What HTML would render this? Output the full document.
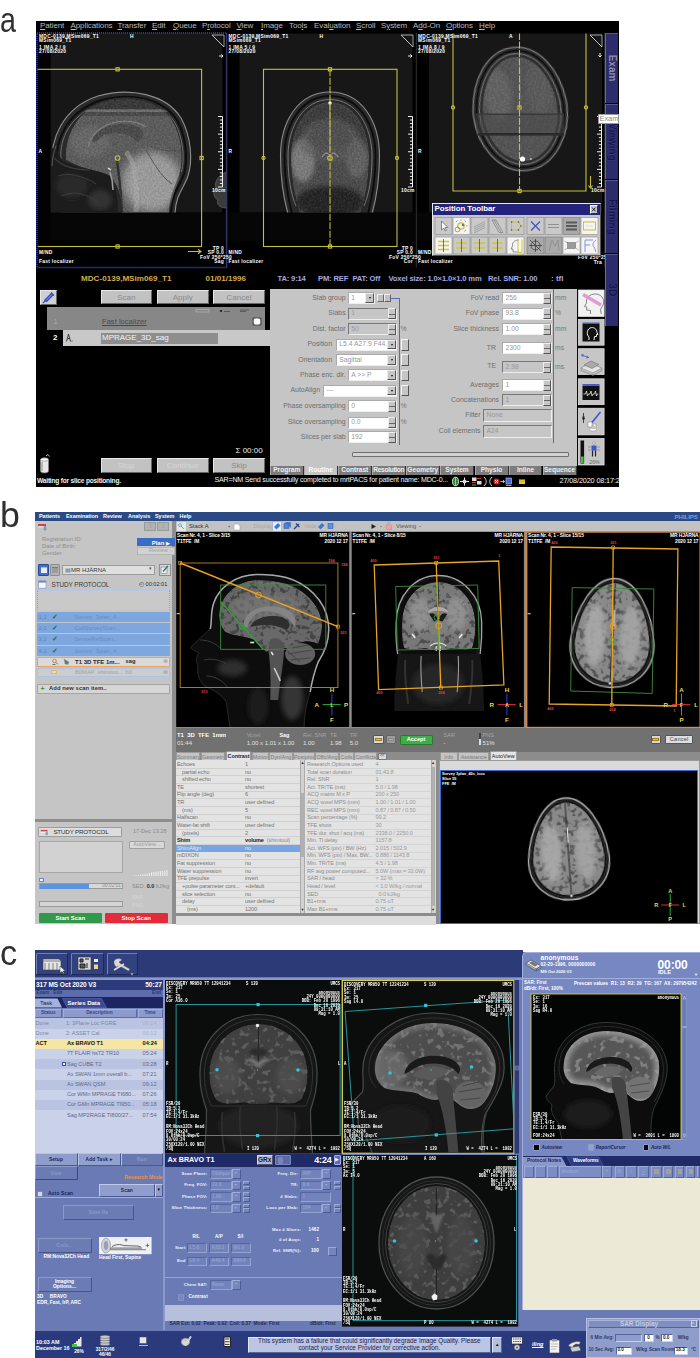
<!DOCTYPE html>
<html><head><meta charset="utf-8"><title>MRI consoles</title>
<style>
*{box-sizing:border-box;margin:0;padding:0}
html,body{width:700px;height:1358px;background:#fff;overflow:hidden}
body{position:relative;font-family:"Liberation Sans",sans-serif;font-size:8px;color:#000}
.ab,.ab>*{position:absolute}
.t{position:absolute;white-space:nowrap;line-height:1}
.lbl{position:absolute;font-size:35px;color:#303030;line-height:1;font-family:"Liberation Sans",sans-serif;transform:scaleX(0.88);transform-origin:0 0}
svg{position:absolute;overflow:hidden}
/* ---------- panel a ---------- */
#pa{position:absolute;left:36px;top:20.5px;width:582.5px;height:466px;background:#000;overflow:hidden}
#pa .menu{position:absolute;left:0;top:0;width:100%;height:11.5px;background:#000}
#pa .menu span{position:absolute;top:1.5px;font-size:8px;color:#b8b8b8;line-height:1;letter-spacing:-0.1px}
#pa .menu u{text-decoration-thickness:0.6px;text-underline-offset:0.5px}
.vw{position:absolute;background:#000;overflow:hidden}
.vt{position:absolute;color:#fff;font-size:4.9px;font-weight:bold;line-height:4.5px;white-space:nowrap;letter-spacing:0.28px}
.btnA{position:absolute;background:#c2c2c2;color:#8a8a8a;font-size:8px;text-align:center;border:0.7px solid #e8e8e8;border-right-color:#666;border-bottom-color:#666}
.laA{position:absolute;font-size:6.9px;margin-top:0.4px;color:#6e6e6e;text-align:right;white-space:nowrap;line-height:1}
.fdA{position:absolute;background:#fff;border:0.6px solid #aaa;border-right-color:#eee;border-bottom-color:#eee;font-size:6.8px;color:#999;line-height:1;padding:1.6px 0 0 2.5px;white-space:nowrap;overflow:hidden}
.fdA.g{background:#c6c6c6;border-color:#777 #eee #eee #777}
.spA{position:absolute;width:8px;height:11px;background:#c6c6c6;border:0.6px solid #eee;border-right-color:#555;border-bottom-color:#555}
.spA:after{content:"";position:absolute;left:0;right:0;top:4.6px;height:0.7px;background:#666}
.ddA{position:absolute;width:9px;height:9.6px;margin-left:-1.2px;background:#c6c6c6;border:0.6px solid #eee;border-right-color:#555;border-bottom-color:#555}
.ddA:after{content:"";position:absolute;left:2.4px;top:3.2px;border:1.7px solid transparent;border-top:2.2px solid #111;border-bottom:0}
.tbA{position:absolute;width:6.5px;height:8.5px;background:#c0c0c0;border:0.6px solid #eee;border-right-color:#666;border-bottom-color:#666}
.xbA{position:absolute;width:8.5px;height:11.5px;background:#c6c6c6;border:0.6px solid #f4f4f4;border-right-color:#555;border-bottom-color:#555}
.vtab{position:absolute;left:604.8px;width:13.7px;background:#2c2c6c;border-left:0.8px solid #6a6a9a;border-top:0.8px solid #55558a}
.vtab span{position:absolute;left:50%;top:50%;transform:translate(-50%,-50%) rotate(90deg);font-size:10px;font-weight:bold;color:#8c8ca6;white-space:nowrap;line-height:1}
.vtab span.d{color:#15154a;text-shadow:0.4px 0.4px 0 #4a4a90}
.btA{position:absolute;top:466px;height:9px;background:#7c7c7c;color:#f2f2f2;font-size:6.6px;font-weight:bold;text-align:center;line-height:8.6px;white-space:nowrap;border-right:0.7px solid #333;border-left:0.7px solid #aaa;overflow:hidden}
.btA.act{background:#c5c5c5;color:#fafafa;top:465.5px;height:9.5px}
.unA{position:absolute;font-size:6.8px;color:#777;line-height:1}
/* ---------- panel b ---------- */
.mb{top:514.3px;font-size:5.5px;font-weight:bold;color:#fff;letter-spacing:-0.05px}
.g6{font-size:5.8px;color:#8c8c8c}
.si{left:36.600px;width:133px;height:10.4px;background:#7da7de;font-size:5.8px;line-height:10.4px;white-space:nowrap}
.si i{position:absolute;left:2px;font-style:normal;color:#5c84c4}
.si b{position:absolute;left:15px;color:#1d6a3a;font-size:7px;font-weight:bold}
.si u{position:absolute;left:37.8px;text-decoration:none;color:#6a8cc4}
.bvt{font-size:4.9px;line-height:6.2px;color:#fff;font-weight:bold;letter-spacing:-0.1px}
.ib{font-size:6px;color:#e0e0e0}
.ib2{font-size:5.6px;color:#a4a4a4}
.tbB{top:752.2px;height:8.2px;background:#c4c4c4;border:0.5px solid #9a9a9a;border-bottom:none;border-radius:1.5px 1.5px 0 0;font-size:5.4px;line-height:8px;text-align:center;color:#787878;white-space:nowrap;overflow:hidden}
.tbB.act{background:#e6e6e6;color:#222;font-weight:bold;top:751.4px;height:9.2px;line-height:9px}
.lr{font-size:5.6px;letter-spacing:-0.12px}
.cvt{font-family:"Liberation Mono",monospace;font-size:5.4px;line-height:4.35px;color:#fff;font-weight:bold;letter-spacing:0;transform:scaleX(0.74);transform-origin:0 0}
.cvt.r{transform-origin:100% 0}
</style></head><body>
<div class="lbl" style="left:0.200px;top:1.500px;transform:scaleX(0.82)">a</div>
<div class="lbl" style="left:0.300px;top:496.800px;transform:scaleX(1.02)">b</div>
<div class="lbl" style="left:0.200px;top:934.500px;transform:scaleX(0.98)">c</div>
<div id="pa">
<div class="menu">
<span style="left:4px"><u>P</u>atient</span><span style="left:34.5px"><u>A</u>pplications</span><span style="left:81.5px"><u>T</u>ransfer</span><span style="left:116px"><u>E</u>dit</span><span style="left:137px"><u>Q</u>ueue</span><span style="left:166px">P<u>r</u>otocol</span><span style="left:200.5px"><u>V</u>iew</span><span style="left:225px"><u>I</u>mage</span><span style="left:253px">Too<u>l</u>s</span><span style="left:278px">Eval<u>u</u>ation</span><span style="left:320px"><u>S</u>croll</span><span style="left:345px">S<u>y</u>stem</span><span style="left:377px">A<u>d</u>d-On</span><span style="left:410px"><u>O</u>ptions</span><span style="left:443px"><u>H</u>elp</span>
</div>
<div class="in" style="position:absolute;left:-36px;top:-20.5px;width:700px;height:1358px">
<svg style="left:36px;top:32px;width:570px;height:237px" viewBox="36 32 570 237">
<defs>
<filter id="b1" x="-10%" y="-10%" width="120%" height="120%"><feGaussianBlur stdDeviation="0.7"/></filter>
<filter id="b2" x="-20%" y="-20%" width="140%" height="140%"><feGaussianBlur stdDeviation="2.2"/></filter>
<filter id="b3" x="-20%" y="-20%" width="140%" height="140%"><feGaussianBlur stdDeviation="4"/></filter>
<filter id="nzA" x="0" y="0" width="100%" height="100%" color-interpolation-filters="sRGB">
<feTurbulence type="fractalNoise" baseFrequency="0.55" numOctaves="2" seed="3" result="n"/>
<feColorMatrix in="n" type="matrix" values="0.6 0 0 0 -0.18  0.6 0 0 0 -0.18  0.6 0 0 0 -0.18  0 0 0 0 1" result="g"/>
<feComposite in="SourceGraphic" in2="g" operator="arithmetic" k1="0" k2="1" k3="0.3" k4="-0.02" result="a"/>
<feComposite in="a" in2="SourceGraphic" operator="in" result="c"/>
<feGaussianBlur in="c" stdDeviation="0.45"/>
</filter>
<linearGradient id="gsA" x1="0" y1="0" x2="0.6" y2="1"><stop offset="0" stop-color="#3c3c3c"/><stop offset="0.45" stop-color="#5a5a5a"/><stop offset="1" stop-color="#9c9c9c"/></linearGradient>
<clipPath id="cv1"><rect x="37.5" y="33.5" width="188.5" height="233.5"/></clipPath>
<clipPath id="cv2"><rect x="227.5" y="33.5" width="188" height="233.5"/></clipPath>
<clipPath id="cv3"><rect x="416.5" y="33.5" width="188" height="233.5"/></clipPath>
<clipPath id="ci1"><rect x="50.4" y="33" width="172" height="179.5"/></clipPath>
<clipPath id="ci2"><rect x="239.5" y="33" width="173" height="179.5"/></clipPath>
<clipPath id="sagbrain"><path d="M66 160 C64 135 78 108 104 100 C130 93 160 98 174 118 C184 134 186 158 182 172 C178 186 172 192 171 212 L122 212 C122 196 118 186 110 176 C100 170 82 170 66 160Z"/></clipPath>
</defs>
<rect x="36" y="32" width="570" height="237" fill="#000"/>
<!-- viewer 1 : sagittal -->
<g clip-path="url(#cv1)">
<rect x="50.400" y="33" width="172" height="179.500" fill="#171717"/>
<rect x="37" y="212.500" width="190" height="28" fill="#060606"/>
<g clip-path="url(#ci1)">
<g filter="url(#b1)">
<path d="M52 166 C50 140 62 108 98 96 C130 87 166 94 181 118 C191 136 193 160 188 176 C184 188 176 194 175 213 L60 213 L54 176Z" fill="#2a2a2a"/>
<path d="M52 166 C50 140 62 108 98 96 C130 87 166 94 181 118 C191 136 193 160 188 176 C184 188 176 194 175 213" fill="none" stroke="#8e8e8e" stroke-width="1.100"/>
<path d="M57 163 C55 140 67 112 100 100.500 C130 92 162 98 177 120 C186 136 188 159 184 174 C180 186 172 192 171 213" fill="none" stroke="#0e0e0e" stroke-width="2"/>
<path d="M61 160 C59 138 71 114 101 103.500 C130 95.500 160 101 174.500 122 C183 137 185 158 181.500 172" fill="none" stroke="#767676" stroke-width="0.900"/>
</g>
<g filter="url(#nzA)">
<path d="M66 160 C64 135 78 110 104 102 C130 95 158 100 172 120 C182 136 184 158 180 172 C176 186 170 192 169 213 L122 213 C122 196 118 186 110 176 C100 170 82 170 66 160Z" fill="#585858"/>
<g clip-path="url(#sagbrain)">
<rect x="60" y="92" width="130" height="17.500" fill="#303030" opacity="0.850"/>
<rect x="60" y="109.500" width="130" height="2.500" fill="#6e6e6e" opacity="0.800"/>
<rect x="60" y="112" width="130" height="4" fill="#3e3e3e" opacity="0.700"/>
<ellipse cx="152" cy="182" rx="30" ry="30" fill="#b0b0b0" opacity="0.700" filter="url(#b3)"/>
<ellipse cx="90" cy="142" rx="20" ry="16" fill="#6e6e6e" opacity="0.500" filter="url(#b2)"/>
<g filter="url(#b1)">
<path d="M92 141 C96 126 122 120 138 127 C146 132 144 140 136 142 C134 135 118 130 104 135 C98 139 96 144 92 141Z" fill="#464646"/>
<path d="M88 147 C92 124 126 114 146 127" fill="none" stroke="#7c7c7c" stroke-width="1.100"/>
<path d="M117 160 C119 176 121 190 122 212" stroke="#2e2e2e" stroke-width="2.500" fill="none"/>
<path d="M126 152 C134 160 138 178 136 212" stroke="#a8a8a8" stroke-width="5" fill="none" opacity="0.450"/>
<path d="M146 150 C152 160 160 176 172 184 M150 146 C158 150 170 152 180 150" stroke="#4a4a4a" stroke-width="0.900" fill="none"/>
</g></g>
</g>
<g filter="url(#b1)">
<path d="M50 150 L56 146 C58 156 62 162 70 164 C82 170 100 170 110 176 C116 184 118 198 118 213 L50 213Z" fill="#1d1d1d"/>
<ellipse cx="72" cy="186" rx="16" ry="12" fill="#2c2c2c" filter="url(#b2)"/>
<ellipse cx="100" cy="200" rx="12" ry="10" fill="#303030" filter="url(#b2)"/>
<path d="M54 158 C62 166 76 170 90 170 M58 176 C68 172 84 176 96 184 M62 196 C74 190 88 194 100 204" stroke="#3a3a3a" stroke-width="1.200" fill="none"/>
<path d="M56 146 C54 152 52 158 52 166" stroke="#5a5a5a" stroke-width="1" fill="none"/>
<path d="M108 168 l3 2" stroke="#e8e8e8" stroke-width="1.400" fill="none"/>
<path d="M110 172 C112 178 113 182 113 190" stroke="#9a9a9a" stroke-width="1.600" fill="none"/>
</g></g>
<g filter="url(#b1)"><path d="M226 172 C218 176 214 182 216 188 C212 192 214 198 218 200 C216 204 220 208 226 208Z" fill="#3a3a3a"/><path d="M226 172 C218 176 214 182 216 188 C212 192 214 198 218 200 C216 204 220 208 226 208" fill="none" stroke="#6a6a6a" stroke-width="0.7"/></g>
<rect x="37" y="33" width="13.400" height="208" fill="#020202"/>
</g>
<!-- viewer 2 : coronal -->
<g clip-path="url(#cv2)">
<rect x="239.500" y="33" width="173" height="179.500" fill="#171717"/>
<rect x="227" y="212.500" width="190" height="28" fill="#060606"/>
<g clip-path="url(#ci2)"><g filter="url(#b1)">
<path d="M330 92 C362 92 379.500 122 379.500 156 C379.500 180 377 196 372 214 L288 214 C283 196 280.500 180 280.500 156 C280.500 122 298 92 330 92Z" fill="#2c2c2c"/>
<path d="M330 92 C362 92 379.500 122 379.500 156 C379.500 180 377 196 372 214 M288 214 C283 196 280.500 180 280.500 156 C280.500 122 298 92 330 92" fill="none" stroke="#8c8c8c" stroke-width="1.100"/>
<path d="M330 96 C358.500 96 375.500 124 375.500 156 C375.500 180 372 198 368 214 M292 214 C288 198 284.500 180 284.500 156 C284.500 124 301.500 96 330 96" fill="none" stroke="#0e0e0e" stroke-width="2"/>
<path d="M330 99.500 C356 99.500 372 126 372 156 C372 178 369 194 364 206 M296 206 C291 194 288 178 288 156 C288 126 304 99.500 330 99.500" fill="none" stroke="#808080" stroke-width="0.900"/>
</g>
<g filter="url(#nzA)">
<path d="M330 102 C354 102 369 127 369 156 C369 178 366 196 360 214 L300 214 C294 196 291 178 291 156 C291 127 306 102 330 102Z" fill="#484848"/>
<path d="M330 102 C354 102 369 127 369 150 L291 150 C291 127 306 102 330 102Z" fill="#2e2e2e" opacity="0.550" filter="url(#b2)"/>
<ellipse cx="303" cy="160" rx="12" ry="22" fill="#8a8a8a" opacity="0.700" filter="url(#b2)"/>
<ellipse cx="357" cy="158" rx="11" ry="20" fill="#6e6e6e" opacity="0.600" filter="url(#b2)"/>
<ellipse cx="330" cy="140" rx="30" ry="22" fill="#5a5a5a" opacity="0.600" filter="url(#b2)"/>
<ellipse cx="330" cy="202" rx="34" ry="16" fill="#1e1e1e" opacity="0.850" filter="url(#b2)"/>
</g>
<g filter="url(#b1)">
<path d="M330 101 L330 150" stroke="#8a8a8a" stroke-width="1"/>
<path d="M322 157 C325 152 328 152 330 156 C332 152 335 152 338 157" stroke="#b0b0b0" stroke-width="0.900" fill="none"/>
<path d="M300 150 C303 142 306 136 312 130 M360 150 C357 142 354 136 348 130" stroke="#707070" stroke-width="0.700" fill="none"/>
<circle cx="330" cy="103" r="1.700" fill="#fff"/>
</g></g>
</g>
<!-- viewer 3 : axial -->
<g clip-path="url(#cv3)">
<rect x="429" y="33" width="173" height="179.500" fill="#171717"/>
<rect x="417" y="212.500" width="190" height="28" fill="#060606"/>
<g transform="rotate(-7 520 109)">
<g filter="url(#b1)">
<path d="M520 47 C546 47 564 74 567 106 C569 140 548 171 520 171 C492 171 471 140 473 106 C476 74 494 47 520 47Z" fill="#2e2e2e" stroke="#8a8a8a" stroke-width="1.100"/>
<path d="M520 50.500 C544 50.500 560.500 76 563.500 106 C565.500 138 546 167.500 520 167.500 C494 167.500 474.500 138 476.500 106 C479.500 76 496 50.500 520 50.500Z" fill="none" stroke="#101010" stroke-width="2"/>
<path d="M520 53.500 C542 53.500 557.500 78 560.500 106 C562.500 136 544 164.500 520 164.500 C496 164.500 477.500 136 479.500 106 C482.500 78 498 53.500 520 53.500Z" fill="none" stroke="#828282" stroke-width="0.900"/>
</g>
<clipPath id="axb"><path d="M520 56.500 C540 56.500 554.500 80 557.500 106 C559.500 134 542 161.500 520 161.500 C498 161.500 480.500 134 482.500 106 C485.500 80 500 56.500 520 56.500Z"/></clipPath>
<g filter="url(#nzA)"><g clip-path="url(#axb)">
<rect x="470" y="50" width="100" height="120" fill="#505050"/>
<ellipse cx="500" cy="92" rx="14" ry="26" fill="#6a6a6a" opacity="0.550" filter="url(#b2)"/>
<ellipse cx="541" cy="92" rx="13" ry="26" fill="#5e5e5e" opacity="0.500" filter="url(#b2)"/>
</g></g>
</g>
<g clip-path="url(#cv3)"><g filter="url(#b1)">
<rect x="476" y="113.500" width="88" height="1.600" fill="#3a3a3a"/>
<rect x="476" y="115" width="88" height="18" fill="#4a4a4a" opacity="0.500"/>
<rect x="478" y="133" width="86" height="2.600" fill="#2c2c2c"/>
<path d="M519 58 L521 100" stroke="#6e6e6e" stroke-width="0.700"/>
<circle cx="522.500" cy="159" r="2.600" fill="#fff"/>
<circle cx="531" cy="159" r="0.900" fill="#ccc"/>
</g></g>
</g>
<!-- overlays: yellow graphics -->
<g fill="none" stroke="#c2c03c" stroke-width="1.100">
<g clip-path="url(#cv1)"><rect x="33.600" y="69.300" width="168" height="177.200"/><circle cx="117.600" cy="158" r="2.300"/>
<rect x="116" y="67.700" width="3.200" height="3.200"/><rect x="200" y="156.400" width="3.200" height="3.200"/><rect x="116" y="244.900" width="3.200" height="3.200"/>
<path d="M188 251.5 h13 m-3 -2.2 l3 2.2 l-3 2.2"/></g>
<g clip-path="url(#cv2)"><rect x="263.500" y="69.300" width="133.500" height="177.200"/><circle cx="330" cy="158" r="2.300"/>
<path d="M330 69.300 V246.500" stroke-dasharray="7 1.500"/>
<rect x="328.400" y="67.700" width="3.200" height="3.200"/><rect x="328.400" y="244.900" width="3.200" height="3.200"/>
<circle cx="263.500" cy="158" r="1.600"/><circle cx="397" cy="158" r="1.600"/>
</g>
<g clip-path="url(#cv3)"><path d="M453 33 V191 H586 V33"/><path d="M519.500 33 V191" stroke-dasharray="7 1.500"/>
<rect x="517.900" y="105.900" width="3.200" height="3.200"/><rect x="517.900" y="189.400" width="3.200" height="3.200"/>
<circle cx="453" cy="107.500" r="1.600"/><circle cx="586" cy="107.500" r="1.600"/>
<path d="M590.500 176 v12 m-2 -2.500 l2 2.500 l2 -2.500"/></g>
</g>
<!-- rulers -->
<g stroke="#f0f0f0" stroke-width="1" fill="none">
<path d="M222.5 116.5 V187 M218.0 116.50 h4.5 M219.9 120.03 h2.6 M219.9 123.55 h2.6 M219.9 127.08 h2.6 M219.9 130.60 h2.6 M218.0 134.12 h4.5 M219.9 137.65 h2.6 M219.9 141.18 h2.6 M219.9 144.70 h2.6 M219.9 148.22 h2.6 M218.0 151.75 h4.5 M219.9 155.28 h2.6 M219.9 158.80 h2.6 M219.9 162.32 h2.6 M219.9 165.85 h2.6 M218.0 169.38 h4.5 M219.9 172.90 h2.6 M219.9 176.43 h2.6 M219.9 179.95 h2.6 M219.9 183.47 h2.6 M218.0 187.00 h4.5 "/>
<path d="M412.5 116.5 V187 M408.0 116.50 h4.5 M409.9 120.03 h2.6 M409.9 123.55 h2.6 M409.9 127.08 h2.6 M409.9 130.60 h2.6 M408.0 134.12 h4.5 M409.9 137.65 h2.6 M409.9 141.18 h2.6 M409.9 144.70 h2.6 M409.9 148.22 h2.6 M408.0 151.75 h4.5 M409.9 155.28 h2.6 M409.9 158.80 h2.6 M409.9 162.32 h2.6 M409.9 165.85 h2.6 M408.0 169.38 h4.5 M409.9 172.90 h2.6 M409.9 176.43 h2.6 M409.9 179.95 h2.6 M409.9 183.47 h2.6 M408.0 187.00 h4.5 "/>
<path d="M601.5 116.5 V187 M597.0 116.50 h4.5 M598.9 120.03 h2.6 M598.9 123.55 h2.6 M598.9 127.08 h2.6 M598.9 130.60 h2.6 M597.0 134.12 h4.5 M598.9 137.65 h2.6 M598.9 141.18 h2.6 M598.9 144.70 h2.6 M598.9 148.22 h2.6 M597.0 151.75 h4.5 M598.9 155.28 h2.6 M598.9 158.80 h2.6 M598.9 162.32 h2.6 M598.9 165.85 h2.6 M597.0 169.38 h4.5 M598.9 172.90 h2.6 M598.9 176.43 h2.6 M598.9 179.95 h2.6 M598.9 183.47 h2.6 M597.0 187.00 h4.5 "/>
</g>
<!-- corner fold icons + arrows -->
<g stroke="#c8c8c8" stroke-width="0.8" fill="none">
<path d="M212 35 h12 v12 z M212 35 l12 12"/><path d="M401 35 h12 v12 z M401 35 l12 12"/><path d="M590 35 h12 v12 z M590 35 l12 12"/>
</g>
<g stroke="#fff" stroke-width="0.9" fill="none"><path d="M219 56 h4 m-1.600 -1.600 l1.600 1.600 l-1.600 1.600"/><path d="M408 56 h4 m-1.600 -1.600 l1.600 1.600 l-1.600 1.600"/><path d="M600 53 v4 m-1.600 -1.600 l1.600 1.600 l1.600 -1.600"/></g>
<!-- dotted blue borders -->
<rect x="37" y="33" width="189.500" height="234.500" fill="none" stroke="#3a48d8" stroke-width="1.300" stroke-dasharray="1.100 0.900"/>
<path d="M226.800 33 V267.500 M416.300 33 V267.500 M604.800 33 V267.500" stroke="#555" stroke-width="0.6"/>
</svg>
<!-- viewer texts -->
<div class="vt" style="left:39px;top:34.500px">MDC-0139,MSim069_T1<br>MSim069_T1</div><div class="vt" style="left:39px;top:45.500px">1 IMA 2 / 9<br>27/08/2020</div>
<div class="vt" style="left:130px;top:34.500px">H</div><div class="vt" style="left:38.500px;top:149.500px">A</div>
<div class="vt" style="left:39px;top:250.500px">M/ND</div><div class="vt" style="left:39px;top:260px">Fast localizer</div>
<div class="vt" style="left:200px;top:246.500px;width:24px;text-align:right">TP 0<br>SP 0.0<br>FoV 250*250<br>Sag</div>
<div class="vt" style="left:212px;top:188.500px">10cm</div>

<div class="vt" style="left:228.500px;top:34.500px">MDC-0139,MSim069_T1<br>MSim069_T1</div><div class="vt" style="left:228.500px;top:45.500px">1 IMA 5 / 9<br>27/08/2020</div>
<div class="vt" style="left:319.500px;top:34.500px">H</div><div class="vt" style="left:228.500px;top:149.500px">R</div>
<div class="vt" style="left:228.500px;top:250.500px">M/ND</div><div class="vt" style="left:228.500px;top:260px">Fast localizer</div>
<div class="vt" style="left:389px;top:246.500px;width:24px;text-align:right">TP 0<br>SP 0.0<br>FoV 250*250<br>Cor</div>
<div class="vt" style="left:401px;top:188.500px">10cm</div>

<div class="vt" style="left:418px;top:34.500px">MDC-0139,MSim069_T1<br>MSim069_T1</div><div class="vt" style="left:418px;top:45.500px">1 IMA 8 / 9<br>27/08/2020</div>
<div class="vt" style="left:509px;top:34.500px">A</div><div class="vt" style="left:418px;top:149.500px">R</div>
<div class="vt" style="left:418px;top:250.500px">M/ND</div><div class="vt" style="left:418px;top:260px">Fast localizer</div>
<div class="vt" style="left:578px;top:256px;width:24px;text-align:right">FoV 250*250<br>Tra</div>
<div class="vt" style="left:591px;top:188.500px">10cm</div>
<!-- header row -->
<div class="t" style="left:81px;top:275px;font-size:8.100px;font-weight:bold;color:#d4ac52">MDC-0139,MSim069_T1</div>
<div class="t" style="left:205.500px;top:275px;font-size:8.100px;font-weight:bold;color:#d4ac52">01/01/1996</div>
<div class="t" style="left:277.500px;top:275px;font-size:7.600px;font-weight:bold;color:#a4a8e4;letter-spacing:-0.150px">TA: 9:14</div>
<div class="t" style="left:318px;top:275px;font-size:7.600px;font-weight:bold;color:#a4a8e4;letter-spacing:-0.150px">PM: REF</div>
<div class="t" style="left:352.500px;top:275px;font-size:7.600px;font-weight:bold;color:#a4a8e4;letter-spacing:-0.150px">PAT: Off</div>
<div class="t" style="left:388.500px;top:275px;font-size:7.600px;font-weight:bold;color:#a4a8e4;letter-spacing:-0.150px">Voxel size: 1.0×1.0×1.0 mm</div>
<div class="t" style="left:488px;top:275px;font-size:7.600px;font-weight:bold;color:#a4a8e4;letter-spacing:-0.150px">Rel. SNR: 1.00</div>
<div class="t" style="left:551px;top:275px;font-size:8px;font-weight:bold;color:#a4a8e4">: tfl</div>
<!-- queue -->
<div class="btnA" style="left:40px;top:289.500px;width:16.500px;height:15.500px;background:#cfcfcf"></div>
<svg style="left:40px;top:289.500px;width:16.500px;height:15.500px" viewBox="0 0 16.500 15.500"><path d="M3 13 L5.500 10.500 M5 10 L11.500 3.500 L13 5 L6.500 11.500Z M11 2.500 L14 5.500" stroke="#3a4ec0" stroke-width="1.300" fill="#8090e0"/></svg>
<div class="btnA" style="left:100.500px;top:289.500px;width:51.500px;height:14.500px;line-height:13px">Scan</div>
<div class="btnA" style="left:157px;top:289.500px;width:51.500px;height:14.500px;line-height:13px">Apply</div>
<div class="btnA" style="left:213px;top:289.500px;width:52px;height:14.500px;line-height:13px">Cancel</div>
<div style="position:absolute;left:47px;top:307px;width:218px;height:22.500px;background:#878787"></div>
<div class="t" style="left:53.500px;top:317.500px;font-size:7.600px;color:#a8a8a8">1</div>
<div class="t" style="left:102px;top:317.500px;font-size:7.600px;color:#4a4a4a;text-decoration:underline">Fast localizer</div>
<svg style="left:190px;top:308px;width:75px;height:20px" viewBox="190 308 75 20"><rect x="196" y="309.500" width="13" height="2.500" fill="none" stroke="#c8c8c8" stroke-width="0.500"/><circle cx="221" cy="311" r="1" fill="#111"/><path d="M224 311.500 h6 M240 310 h9 M240 311.500 h6" stroke="#444" stroke-width="0.700"/><ellipse cx="257" cy="321.500" rx="3.400" ry="3.600" fill="#fff"/><rect x="253" y="318" width="8" height="7" fill="none" stroke="#222" stroke-width="0.600"/></svg>
<div class="t" style="left:53px;top:333.500px;font-size:8px;color:#fff;font-weight:bold">2</div>
<div style="position:absolute;left:63px;top:329.500px;width:207px;height:16px;background:#c8c8c8"></div>
<div style="position:absolute;left:100.500px;top:332.500px;width:117px;height:11.200px;background:#8e8e8e"></div>
<div class="t" style="left:102px;top:334.200px;font-size:8px;color:#f4f4f4">MPRAGE_3D_sag</div>
<svg style="left:64px;top:332px;width:10px;height:12px" viewBox="0 0 10 12"><path d="M4.500 2 L2.500 9.500 M4.500 2 L6.500 9.500 M3.500 6.500 h2.500 M7.500 9 h1" stroke="#333" stroke-width="0.900" fill="none"/></svg>
<div class="t" style="left:235.500px;top:446.500px;font-size:8px;color:#eee">Σ 00:00</div>
<div class="btnA" style="left:100.500px;top:458px;width:51.500px;height:14.500px;line-height:13px;color:#d6d6d6">Stop</div>
<div class="btnA" style="left:157px;top:458px;width:51.500px;height:14.500px;line-height:13px;color:#d6d6d6">Continue</div>
<div class="btnA" style="left:213px;top:458px;width:52px;height:14.500px;line-height:13px">Skip</div>
<svg style="left:38px;top:454px;width:14px;height:20px" viewBox="0 0 14 20"><path d="M2.500 6 C2.500 3 10.500 3 10.500 6 V17 C10.500 19.500 2.500 19.500 2.500 17Z" fill="#e8e8e8" stroke="#888" stroke-width="0.600"/><ellipse cx="6.500" cy="5.500" rx="4" ry="1.600" fill="#fff" stroke="#666" stroke-width="0.500"/><path d="M8 2 l2 -1.500 l1.500 2" stroke="#ddd" stroke-width="0.800" fill="none"/><path d="M4 8 V17" stroke="#999" stroke-width="1.200"/></svg>
<!-- param panel -->
<div style="position:absolute;left:269.600px;top:289px;width:307px;height:177px;background:#c5c5c5"></div>
<div style="position:absolute;left:577px;top:289px;width:28.5px;height:177px;background:#000"></div>
<!-- left column -->
<div class="laA" style="left:270px;width:75.600px;top:294.200px">Slab group</div>
<div class="fdA" style="left:347.700px;top:292px;width:27px;height:12px">1</div><div class="ddA" style="left:366.500px;top:293px"></div>
<div class="tbA" style="left:377px;top:293.500px"></div><div class="tbA" style="left:384px;top:293.500px"></div>
<div class="laA" style="left:270px;width:75.600px;top:309.700px">Slabs</div>
<div class="fdA g" style="left:347.700px;top:307.500px;width:49px;height:12px">1</div><div class="spA" style="left:388px;top:308px"></div>
<div class="laA" style="left:270px;width:75.600px;top:325.200px">Dist. factor</div>
<div class="fdA g" style="left:347.700px;top:323px;width:49px;height:12px">50</div><div class="spA" style="left:388px;top:323.500px"></div><div class="unA" style="left:400.600px;top:325.500px">%</div>
<div class="laA" style="left:270px;width:62px;top:341px">Position</div>
<div class="fdA" style="left:335.700px;top:338.800px;width:61px;height:12px">L5.4 A27.9 F44.7</div><div class="ddA" style="left:388.500px;top:339.800px"></div><div class="xbA" style="left:400.600px;top:339px"></div>
<div class="laA" style="left:270px;width:62px;top:356.200px">Orientation</div>
<div class="fdA" style="left:335.700px;top:354px;width:61px;height:12px">Sagittal</div><div class="ddA" style="left:388.500px;top:355px"></div><div class="xbA" style="left:400.600px;top:354.200px"></div>
<div class="laA" style="left:270px;width:75.600px;top:371.600px">Phase enc. dir.</div>
<div class="fdA" style="left:347.700px;top:369.400px;width:49px;height:12px">A &gt;&gt; P</div><div class="ddA" style="left:388.500px;top:370.400px"></div><div class="xbA" style="left:400.600px;top:369.600px"></div>
<div class="laA" style="left:270px;width:50px;top:386.700px">AutoAlign</div>
<div class="fdA" style="left:323px;top:384.500px;width:73.700px;height:12px">---</div><div class="ddA" style="left:388.500px;top:385.500px"></div><div class="xbA" style="left:400.600px;top:384.700px"></div>
<div class="laA" style="left:270px;width:75.600px;top:402.600px">Phase oversampling</div>
<div class="fdA" style="left:347.700px;top:400.400px;width:49px;height:12px">0</div><div class="spA" style="left:388px;top:400.900px"></div><div class="unA" style="left:400.600px;top:403px">%</div>
<div class="laA" style="left:270px;width:75.600px;top:418.700px">Slice oversampling</div>
<div class="fdA" style="left:347.700px;top:416.500px;width:49px;height:12px">0.0</div><div class="spA" style="left:388px;top:417px"></div><div class="unA" style="left:400.600px;top:419px">%</div>
<div class="laA" style="left:270px;width:75.600px;top:433.400px">Slices per slab</div>
<div class="fdA" style="left:347.700px;top:431.200px;width:49px;height:12px">192</div><div class="spA" style="left:388px;top:431.700px"></div>
<div style="position:absolute;left:391px;top:298px;width:9px;height:0.800px;background:#5a66c0"></div>
<div style="position:absolute;left:399.300px;top:298px;width:0.900px;height:147px;background:#5a66c0"></div>
<div style="position:absolute;left:351.600px;top:452px;width:217.500px;height:4.500px;background:#d2d2d2;border:0.600px solid #707070;border-radius:1px"></div>
<!-- right column -->
<div class="laA" style="left:420px;width:79px;top:294.200px">FoV read</div>
<div class="fdA" style="left:502px;top:292px;width:49.500px;height:12px">256</div><div class="spA" style="left:543px;top:292.500px"></div><div class="unA" style="left:555px;top:294.500px">mm</div>
<div class="laA" style="left:420px;width:79px;top:309.800px">FoV phase</div>
<div class="fdA" style="left:502px;top:307.600px;width:49.500px;height:12px">93.8</div><div class="spA" style="left:543px;top:308.100px"></div><div class="unA" style="left:555px;top:310px">%</div>
<div class="laA" style="left:420px;width:79px;top:325.200px">Slice thickness</div>
<div class="fdA" style="left:502px;top:323px;width:49.500px;height:12px">1.00</div><div class="spA" style="left:543px;top:323.500px"></div><div class="unA" style="left:555px;top:325.500px">mm</div>
<div class="laA" style="left:420px;width:76px;top:344.500px">TR</div>
<div class="fdA" style="left:502px;top:342.300px;width:49.500px;height:12px">2300</div><div class="spA" style="left:543px;top:342.800px"></div><div class="unA" style="left:555px;top:345px">ms</div>
<div class="laA" style="left:420px;width:76px;top:363px">TE</div>
<div class="fdA g" style="left:502px;top:361px;width:49.500px;height:12px">2.98</div><div class="spA" style="left:543px;top:361.500px"></div><div class="unA" style="left:555px;top:363.500px">ms</div>
<div class="laA" style="left:420px;width:79px;top:381.200px">Averages</div>
<div class="fdA" style="left:502px;top:379px;width:49.500px;height:12px">1</div><div class="spA" style="left:543px;top:379.500px"></div>
<div class="laA" style="left:420px;width:79px;top:396.400px">Concatenations</div>
<div class="fdA g" style="left:502px;top:394.200px;width:49.500px;height:12px">1</div><div class="spA" style="left:543px;top:394.700px"></div>
<div class="laA" style="left:420px;width:60.500px;top:411.400px">Filter</div>
<div class="fdA g" style="left:483px;top:409px;width:68.700px;height:12.500px">None</div>
<div class="laA" style="left:400px;width:80.500px;top:427.500px">Coil elements</div>
<div class="fdA g" style="left:483px;top:425px;width:68.700px;height:12.500px">A24</div>
<div style="position:absolute;left:553.200px;top:289px;width:0.900px;height:154px;background:#5a66c0"></div>
<!--PA-ICONS-->

<!-- position toolbar -->
<div style="position:absolute;left:431.600px;top:202.600px;width:169.500px;height:53.600px;background:#c6c6c6;border:0.700px solid #e8e8e8;border-right-color:#555;border-bottom-color:#555"></div>
<div style="position:absolute;left:433px;top:204px;width:166.500px;height:11px;background:#23237c"></div>
<div class="t" style="left:434.500px;top:205.200px;font-size:7.900px;font-weight:bold;color:#fff;letter-spacing:-0.050px">Position Toolbar</div>
<div style="position:absolute;left:589.500px;top:205.300px;width:8.500px;height:8.500px;background:#c6c6c6;border:0.600px solid #fff;border-right-color:#333;border-bottom-color:#333"></div>
<svg style="left:431px;top:202px;width:171px;height:55px" viewBox="431 202 171 55">
<g id="ptbtn">
<g fill="#c9c9c9" stroke="#8a8a8a" stroke-width="0.600">
<rect x="435" y="217.500" width="17" height="17"/><rect x="471" y="217.500" width="17" height="17"/><rect x="489" y="217.500" width="17" height="17"/><rect x="507" y="217.500" width="17" height="17"/><rect x="527" y="217.500" width="17" height="17"/><rect x="545" y="217.500" width="17" height="17"/>
<rect x="453" y="237" width="17" height="17"/><rect x="471" y="237" width="17" height="17"/><rect x="489" y="237" width="17" height="17"/>
</g>
<g fill="#f4f4f4" stroke="#8a8a8a" stroke-width="0.600"><rect x="453" y="217.500" width="17" height="17"/><rect x="581" y="217.500" width="17" height="17"/><rect x="435" y="237" width="17" height="17"/><rect x="507" y="237" width="17" height="17"/><rect x="563" y="237" width="17" height="17"/><rect x="581" y="237" width="17" height="17"/></g>
<g fill="#a9a9a9" stroke="#777" stroke-width="0.600"><rect x="563" y="217.500" width="17" height="17"/><rect x="527" y="237" width="17" height="17"/><rect x="545" y="237" width="17" height="17"/></g>
</g>
<path d="M592 207.500 l3.600 3.800 m0 -3.800 l-3.600 3.800" stroke="#111" stroke-width="0.900"/>
<!-- row 1 icons -->
<path d="M441.500 221 v9 l2.200 -2 l1.600 3 l1.200 -0.600 l-1.500 -3 h2.800z" fill="#fff" stroke="#444" stroke-width="0.600"/>
<g fill="none" stroke="#666" stroke-width="0.600"><circle cx="461" cy="226" r="3.200" stroke="#c8c032" stroke-width="1.200"/><circle cx="457.500" cy="229.500" r="2.400"/><path d="M456 222 l1.500 -1.500 M466 222 l-1.500 -1.500 M466 230 l-1.500 1.500 M461 219.500 v1.500 M467.500 226 h-1.500"/><circle cx="463" cy="225" r="1" fill="#3a3"/></g>
<path d="M474 229 l11 -5.500 M474 231 l11 -5.500 M474 227 l11 -5.500 M474 233 l11 -5.500" stroke="#8a8a8a" stroke-width="0.600"/>
<path d="M492 220 l4 0 l7 12.500 l-4 0z M494 220 l7 12.500" fill="none" stroke="#6e6e6e" stroke-width="0.600"/>
<path d="M511.500 222 h7 l2.500 4 l-2.500 4 h-7z" fill="none" stroke="#c8c032" stroke-width="1"/><g fill="#555"><circle cx="511.500" cy="222" r="0.800"/><circle cx="518.500" cy="222" r="0.800"/><circle cx="521" cy="226" r="0.800"/><circle cx="518.500" cy="230" r="0.800"/><circle cx="511.500" cy="230" r="0.800"/></g>
<path d="M531 221.500 l9 9 m0 -9 l-9 9" stroke="#3a52c8" stroke-width="1.100"/>
<path d="M548 224.500 h11 M548 227.500 h11" stroke="#777" stroke-width="0.700"/>
<path d="M566 222.500 h11 M566 226 h11 M566 229.500 h11" stroke="#5a5a5a" stroke-width="1.800"/>
<rect x="583.500" y="222" width="12" height="8" fill="none" stroke="#c8c032" stroke-width="1"/><path d="M585.500 226 h8" stroke="#c8c032" stroke-width="0.600" stroke-dasharray="1 1"/>
<!-- row 2 icons -->
<g stroke="#d4c82e" stroke-width="1.300" fill="none">
<path d="M438 241.500 h11 M438 245.500 h11 M438 249.500 h11"/><path d="M456 243 h11 M456 248 h11"/><path d="M474 243 h11 M474 248 h11"/><path d="M492 243 h11 M492 248 h11"/>
</g>
<g stroke="#444" stroke-width="0.700"><path d="M443.500 239 v13 M461.500 239 v13 M479.500 239 v13 M497.500 239 v13"/></g>
<path d="M519 240 c-5 0 -7 3 -6.500 6 l-1.500 3 h2 v3 h6" fill="none" stroke="#666" stroke-width="0.700"/><path d="M518 239.500 v13 h4 v-13" fill="none" stroke="#d4c82e" stroke-width="1"/>
<circle cx="535.500" cy="245.500" r="4.500" fill="none" stroke="#333" stroke-width="0.700"/><path d="M529 245.500 h13 M535.500 239 v13 M530 240 l11 11" stroke="#333" stroke-width="0.700"/>
<path d="M549 251 l3 -11 l3 6 l3 -6 l1 11" fill="none" stroke="#8c8c8c" stroke-width="0.800"/>
<rect x="567.500" y="242.500" width="8" height="6" fill="#9a9a9a" stroke="#666" stroke-width="0.500"/><path d="M564.500 241 l3 2 M564.500 250 l3 -2 M578.500 241 l-3 2 M578.500 250 l-3 -2" stroke="#888" stroke-width="0.600"/>
<path d="M585 252 v-12 h8 M585 245 h5 M596 240 c-3 2 -4 5 -2 7 c1.500 2 1 4 2 5" fill="none" stroke="#7a88d8" stroke-width="0.900"/>
</svg>
<!-- right tab strip -->
<div style="position:absolute;left:604.800px;top:32px;width:13.700px;height:443.500px;background:#000"></div>
<div class="vtab" style="top:33px;height:69.500px"><span>Exam</span></div>
<div class="vtab" style="top:103.500px;height:75.500px"><span class="d">Viewing</span></div>
<div class="vtab" style="top:179.500px;height:73.500px"><span class="d">Filming</span></div>
<div class="vtab" style="top:253.500px;height:72.500px"><span class="d">3D</span></div>
<div style="position:absolute;left:597.700px;top:114px;width:21px;height:9.700px;background:#fff;border:0.500px solid #999"></div>
<div class="t" style="left:599.500px;top:115.300px;font-size:7.400px;color:#8a8a8a">Exam</div>
<!-- icon column -->
<svg style="left:577px;top:289px;width:28px;height:178px" viewBox="577 289 28 178">
<g stroke="#e8e8e8" stroke-width="0.7">
<rect x="578.3" y="290" width="25.8" height="26.5" fill="#f2f2f2"/>
<rect x="578.3" y="319.3" width="25.8" height="25.9" fill="#c6c6c6"/>
<rect x="578.3" y="348.7" width="25.8" height="25.9" fill="#c6c6c6"/>
<rect x="578.3" y="378.8" width="25.8" height="25.9" fill="#c6c6c6"/>
<rect x="578.3" y="408.2" width="25.8" height="26.7" fill="#c6c6c6"/>
<rect x="578.3" y="438.4" width="25.8" height="26.6" fill="#c6c6c6"/>
</g>
<path d="M590.5 314 v-3.6 l-4 -0.4 l0.4 -2.8 l-2.4 -0.8 l2 -3.2 c-1 -5.6 3.6 -9.2 8.6 -9.2 c5.6 0 9.200 4 8.4 9.2 c-0.4 3 -2.6 4.6 -3 6.600 l0.8 4.2" fill="none" stroke="#555" stroke-width="0.7"/>
<path d="M583 294.5 l18 10.5" stroke="#e08ccc" stroke-width="3.4" opacity="0.85"/>
<rect x="582.500" y="324" width="17" height="17.500" fill="#111"/><rect x="582.500" y="322.500" width="17" height="1.500" fill="#4a5ac8"/>
<path d="M589 340 v-3 c-2.500 -2 -2.500 -7 1 -9 c3.500 -1.500 7 1 7 4.500 l1 2 h-1.500 v2 h-2 l-0.500 3.500" fill="none" stroke="#f0f0f0" stroke-width="1"/>
<path d="M581 368 l9 -5 l12 5 l-9 5z" fill="#e4e4e4" stroke="#777" stroke-width="0.600"/><path d="M584 365 l7 -4 l8 3.500 l-7 4z" fill="#aaa" stroke="#666" stroke-width="0.500"/><path d="M581 368 v2.500 l12 5 v-2.500 M593 375.500 l9 -5 v-2.500" fill="#bbb" stroke="#777" stroke-width="0.500"/>
<path d="M581.500 355 l7 2.500 M581.500 355 l1.500 1.800 M581.500 355 l2.300 -0.500 M588.500 357.500 l-2.300 0.500 M588.500 357.500 l-1.500 -1.800" stroke="#3a58d0" stroke-width="0.800" fill="none"/>
<rect x="582.500" y="385.500" width="17" height="14.500" fill="#111"/><rect x="582.500" y="384" width="17" height="1.500" fill="#4a5ac8"/>
<path d="M583.500 394 h2 l1 -3 l1 5 l1 -2 h1.500 l1 -3 l1 5 l1 -2 h1.500 l1 -3 l1 5 l0.800 -2 h1" fill="none" stroke="#fff" stroke-width="0.700"/>
<path d="M583.500 413 v10 M582.300 417 h2.400" stroke="#222" stroke-width="0.800"/><circle cx="583.500" cy="418.500" r="1.300" fill="#222"/>
<path d="M600.500 412 l-9 11" stroke="#3a58d0" stroke-width="1.600"/><path d="M588 422 h4 v5 h-4z M593 424 h3 v4 M589 429 c2 3 6 3 8 0" fill="#fff" stroke="#888" stroke-width="0.600"/>
<rect x="580.500" y="440.500" width="3.600" height="23" fill="#111"/><rect x="581" y="456.500" width="2.600" height="6.500" fill="#3fc83f"/>
<circle cx="594" cy="443" r="1.300" fill="#eee" stroke="#555" stroke-width="0.400"/><path d="M591.500 445.500 h5 v5 h-5z" fill="#3a58d0"/><path d="M592.500 450.500 v6 M595.500 450.500 v6" stroke="#222" stroke-width="1.200"/><path d="M588 447 h3 M588 450 h3 M597 447 h3 M597 450 h3" stroke="#666" stroke-width="0.500"/>
<text x="594.500" y="463.500" font-size="5.200" fill="#666" text-anchor="middle" font-family="Liberation Sans, sans-serif">26%</text>
</svg>
<!-- bottom tabs -->
<div style="position:absolute;left:269.600px;top:465.500px;width:335.500px;height:10px;background:#000"></div>
<div class="btA" style="left:270px;width:33.500px">Program</div>
<div class="btA act" style="left:304px;width:33.500px">Routine</div>
<div class="btA" style="left:338px;width:33.500px">Contrast</div>
<div class="btA" style="left:372px;width:33.500px;letter-spacing:-0.300px">Resolution</div>
<div class="btA" style="left:406px;width:33.500px">Geometry</div>
<div class="btA" style="left:440px;width:34px">System</div>
<div class="btA" style="left:474.500px;width:34px">Physio</div>
<div class="btA" style="left:509px;width:33px">Inline</div>
<div class="btA" style="left:542.500px;width:34px">Sequence</div>
<!-- status bar -->
<div class="t" style="left:37px;top:477.500px;font-size:6.600px;color:#f0f0f0;font-weight:bold;letter-spacing:-0.200px">Waiting for slice positioning.</div>
<div class="t" style="left:214.500px;top:477.200px;font-size:7.100px;color:#f0f0f0;letter-spacing:-0.200px">SAR=NM Send successfully completed to mrtPACS for patient name: MDC-0...</div>
<div class="t" style="left:559.500px;top:477.200px;font-size:7.300px;color:#f0f0f0;letter-spacing:-0.150px">27/08/2020 08:17:27</div>
<svg style="left:445px;top:475.500px;width:85px;height:11px" viewBox="445 475.500 85 11">
<ellipse cx="455.500" cy="481" rx="3" ry="4.300" fill="#2d8a3a" stroke="#e8e8e8" stroke-width="0.900"/><path d="M455.500 477 v8" stroke="#cfe" stroke-width="0.600"/>
<path d="M460 481 h9 M464.500 477 v8" stroke="#eee" stroke-width="1"/><circle cx="464.500" cy="481" r="2" fill="#ddd"/>
<rect x="472" y="477" width="4.500" height="3.500" fill="#ddd"/><rect x="477" y="480.500" width="4.500" height="3.500" fill="#ddd"/><path d="M472 482 h4 M477 478 h4" stroke="#d33" stroke-width="1.200"/><path d="M472 484.500 h4" stroke="#3c3" stroke-width="1"/>
<path d="M484 476.500 c3 3 3 6 0 9 M492 476.500 c-3 3 -3 6 0 9" stroke="#eee" stroke-width="0.900" fill="none"/>
<circle cx="496.500" cy="481" r="3" fill="#d22"/><path d="M495 479.500 l3 3 m0 -3 l-3 3" stroke="#fff" stroke-width="0.900"/>
<path d="M500.500 481 h4 m-1.500 -1.500 l1.500 1.500 l-1.500 1.500" stroke="#eee" stroke-width="0.800" fill="none"/>
<rect x="506" y="477.500" width="5.500" height="6" fill="#4a6ad8" stroke="#ccd" stroke-width="0.600"/><path d="M506 485 h5.500" stroke="#ccc" stroke-width="0.800"/>
<rect x="519" y="479" width="6" height="4.500" fill="#e8c830"/><path d="M519 479 l3 2.500 l3 -2.500" stroke="#a80" stroke-width="0.500" fill="none"/>
</svg>

<!--PA-TABS-->
</div>

</div>
<div id="pb" class="ab" style="left:0;top:0;width:700px;height:1358px">
<div style="left:35.400px;top:511.800px;width:664.600px;height:412.700px;background:#8c8c8c"></div>
<!-- menu -->
<div style="left:35.400px;top:511.800px;width:664.600px;height:9px;background:#2b4a84"></div>
<div class="t mb" style="left:39px">Patients</div><div class="t mb" style="left:66px">Examination</div><div class="t mb" style="left:103px">Review</div><div class="t mb" style="left:128px">Analysis</div><div class="t mb" style="left:155px">System</div><div class="t mb" style="left:179.500px">Help</div>
<div class="t" style="left:674.500px;top:514px;font-size:6.200px;font-weight:bold;color:#6b9de6;letter-spacing:-0.100px">PHILIPS</div>
<!-- left panel -->
<div style="left:35.400px;top:520.800px;width:136.800px;height:403.700px;background:#c5c5c5"></div>
<div style="left:35.400px;top:819px;width:136.800px;height:2.700px;background:#8e8e8e"></div>
<div style="left:172.200px;top:520.800px;width:3.600px;height:403.700px;background:#8e8e8e"></div>
<svg style="left:37px;top:521.500px;width:12px;height:9px" viewBox="0 0 12 9"><rect x="1" y="2" width="8" height="2" fill="#c44"/><rect x="1.500" y="4" width="8" height="1.600" fill="#dde"/><path d="M7 4 v4 h2 v-4" fill="#9ab" stroke="#667" stroke-width="0.400"/></svg>
<div style="left:144px;top:521.700px;width:12px;height:9px;background:#b2b2b2;border:0.500px solid #9a9a9a"></div>
<div style="left:157px;top:521.700px;width:12px;height:9px;background:#b2b2b2;border:0.500px solid #9a9a9a"></div>
<div class="t" style="left:148px;top:523px;font-size:6px;color:#9c9c9c">⇧</div><div class="t" style="left:161px;top:523px;font-size:6px;color:#9c9c9c">⇧</div>
<div class="t g6" style="left:42px;top:536.500px">Registration ID:</div>
<div class="t g6" style="left:42px;top:543.800px">Date of Birth:</div>
<div class="t g6" style="left:42px;top:551.200px">Gender:</div>
<div style="left:137px;top:538px;width:38px;height:8.400px;background:#3b6cc4"></div>
<div class="t" style="left:137px;width:33px;text-align:right;top:539.500px;font-size:6px;font-weight:bold;color:#fff">Plan&nbsp;<span style="font-size:4.500px;vertical-align:0.500px">▶</span></div>
<div style="left:137px;top:546.600px;width:38px;height:8px;background:#d2d2d2;border:0.500px solid #b4b4b4"></div>
<div class="t" style="left:137px;width:35.500px;text-align:right;top:548px;font-size:5.800px;color:#a2a2a2">Review <span style="font-size:4px">▷</span></div>
<div style="left:38.400px;top:564px;width:10.400px;height:11.500px;background:#3d6fd0;border:0.600px solid #2a4a90;border-radius:1px"></div>
<div style="left:40.500px;top:566.500px;width:6.200px;height:6.600px;background:#e8eefc;border-top:1.600px solid #9ab8f0"></div>
<div style="left:50.400px;top:564px;width:10px;height:11.500px;background:#b4b4b4;border:0.600px solid #8c8c8c;border-radius:1px"></div>
<div style="left:52.300px;top:566.500px;width:6.200px;height:6.600px;background:#9a9a9a;border-top:1.600px solid #777"></div>
<div style="left:62.400px;top:564.500px;width:92.200px;height:10.500px;background:#dedede;border:0.600px solid #9a9a9a"></div>
<div class="t" style="left:65px;top:567px;font-size:6px;color:#333"><span style="color:#667">▤</span>MR HJÄRNA</div>
<div class="t" style="left:149px;top:566.800px;font-size:4.600px;color:#555">▾</div>
<div style="left:159px;top:564px;width:11.500px;height:11.500px;background:#d6d6d6;border:0.600px solid #8c8c8c"></div>
<svg style="left:159px;top:564px;width:11.500px;height:11.500px" viewBox="0 0 11.500 11.500"><rect x="2" y="3" width="6" height="6.500" fill="#eee" stroke="#567" stroke-width="0.500"/><path d="M4 7.500 l5 -5.500" stroke="#2a7a6a" stroke-width="1.400"/></svg>
<svg style="left:38px;top:580px;width:9px;height:9px" viewBox="0 0 9 9"><rect x="0.500" y="0.800" width="7.500" height="7.400" fill="#f4f6fc" stroke="#7a90c0" stroke-width="0.600"/><rect x="0.500" y="0.800" width="7.500" height="1.800" fill="#6a8ad0"/></svg>
<div class="t" style="left:51.600px;top:581.600px;font-size:6.400px;color:#3a3a3a;letter-spacing:-0.100px">STUDY PROTOCOL</div>
<div class="t" style="left:139px;top:582px;font-size:5.600px;color:#333">◴ 00:02:01</div>
<div style="left:36.600px;top:589.700px;width:133px;height:20.500px;background:#c9c9c9;border-left:0.800px dotted #7aa8e8;border-right:0.800px dotted #7aa8e8;border-top:0.500px solid #b4c8e8"></div>
<div class="si" style="top:611.600px"><i>1,1</i><b>✓</b><u>Survey&nbsp; 3plan_4...</u></div>
<div class="si" style="top:623px"><i>2,1</i><b>✓</b><u>CoilSurveyScan...</u></div>
<div class="si" style="top:634.400px"><i>3,1</i><b>✓</b><u>SenseRefScan...</u></div>
<div class="si" style="top:645.800px;height:10px"><i>4,1</i><b>✓</b><u>Survey&nbsp; 3plan_4...</u></div>
<div style="left:36.600px;top:656.500px;width:133px;height:10px;background:#dadada;border:0.900px solid #f0a254;border-radius:1px"></div>
<div class="t" style="left:75px;top:658.600px;font-size:6px;font-weight:bold;color:#2a2a2a">T1 3D TFE 1m...</div>
<div class="t" style="left:125.500px;top:658.600px;font-size:5.800px;font-weight:bold;color:#2a2a2a">sag</div>
<svg style="left:50px;top:657px;width:24px;height:9px" viewBox="0 0 24 9"><circle cx="4.500" cy="4" r="1.800" fill="none" stroke="#b87a30" stroke-width="0.800"/><path d="M5.800 5.300 l2 2 M2.500 7.500 h3" stroke="#555" stroke-width="0.800"/><path d="M14 2 l5 3 l-1 2.500 l-3 -0.500z" fill="#3a82c8" stroke="#c84" stroke-width="0.500"/></svg>
<div class="t" style="left:162.500px;top:658.300px;font-size:6px;color:#999">⊗</div>
<div style="left:36.600px;top:667.600px;width:133px;height:9.200px;background:#cdcdcd;border:0.800px solid #a8c4ec;border-radius:1px"></div>
<div style="left:51px;top:670px;width:6px;height:4px;background:#f4d8a8;border:0.400px solid #e0b870"></div>
<div class="t" style="left:75px;top:669.600px;font-size:5.800px;color:#a2a2a2">B0MAP&nbsp; shimtoo...</div>
<div class="t" style="left:125.500px;top:669.600px;font-size:5.800px;color:#a2a2a2">b0</div>
<div class="t" style="left:162.500px;top:669.200px;font-size:6px;color:#999">⊗</div>
<div style="left:36.600px;top:684px;width:133px;height:10px;background:#d6d6d6;border:0.600px solid #a4a4a4;border-radius:1px"></div>
<div class="t" style="left:40.500px;top:685.200px;font-size:7px;color:#3a9a3a;font-weight:bold">+</div>
<div class="t" style="left:49px;top:686.200px;font-size:5.800px;color:#333;font-weight:bold;letter-spacing:0.100px">Add new scan item..</div>
<!-- bottom of left panel -->
<div style="left:38.400px;top:826.600px;width:84px;height:10px;background:#dcdcdc;border:0.600px solid #9c9c9c;border-radius:1px"></div>
<svg style="left:40px;top:828px;width:10px;height:8px" viewBox="0 0 12 9"><rect x="1" y="2" width="8" height="2" fill="#c44"/><rect x="1.500" y="4" width="8" height="1.600" fill="#eef"/><path d="M7 4 v4 h2 v-4" fill="#9ab" stroke="#667" stroke-width="0.400"/></svg>
<div class="t" style="left:53.400px;top:828.600px;font-size:6.200px;color:#2e2e2e;letter-spacing:-0.150px">STUDY PROTOCOL</div>
<div class="t" style="left:133px;top:828.800px;font-size:5.600px;color:#8a8a8a">17-Dec 13:28</div>
<div style="left:39px;top:841px;width:83.500px;height:31.600px;background:#d2d2d2;border:0.600px solid #a6a6a6"></div>
<div style="left:128.500px;top:840.500px;width:36.500px;height:8.500px;background:#d8d8d8;border:0.600px solid #a0a0a0;border-radius:1px"></div>
<div class="t" style="left:128.500px;width:36.500px;text-align:center;top:842.300px;font-size:5.400px;color:#9a9a9a">AutoView...</div>
<svg style="left:133px;top:870px;width:36px;height:7px" viewBox="133 870 36 7"><path d="M134 876 v-0.600 M136.200 876 v-0.800 M138.400 876 v-1 M140.600 876 v-1.200 M142.800 876 v-1.600 M145 876 v-2 M147.200 876 v-2.400 M149.400 876 v-3 M151.600 876 v-3.600 M153.800 876 v-4 M156 876 v-4.400 M158.200 876 v-4.800 M160.400 876 v-5 M162.600 876 v-5.200 M164.800 876 v-5.400 M167 876 v-5.600" stroke="#f0f0f0" stroke-width="1"/></svg>
<div style="left:39px;top:877.500px;width:5px;height:4.500px;background:#e8eefc;border:0.500px solid #6a8ad0;border-top-width:1.200px"></div>
<div style="left:39px;top:883px;width:83.500px;height:6.200px;background:#d8d8d8;border:0.500px solid #9a9a9a"></div>
<div style="left:39.500px;top:883.500px;width:49.500px;height:5.200px;background:#5f93dc"></div>
<div class="t" style="left:100px;width:21px;text-align:right;top:884.200px;font-size:4.800px;color:#8a8a8a">00:02:01</div>
<div class="t" style="left:132px;top:883.800px;font-size:5.600px;color:#8a8a8a">SED: <b style="color:#333">0.0</b> kJ/kg</div>
<div class="t" style="left:132px;top:894.500px;font-size:5.400px;color:#d6d6d6">SAR:</div>
<div class="t" style="left:132px;top:902.500px;font-size:5.400px;color:#d6d6d6">PNS:</div>
<div style="left:39px;top:901px;width:83.500px;height:6.200px;background:#d4d4d4;border:0.500px solid #9a9a9a"></div>
<div style="left:39px;top:912.500px;width:62.500px;height:10.300px;background:#2f9a4b;border-radius:1px"></div>
<div class="t" style="left:39px;width:62.500px;text-align:center;top:914.800px;font-size:6px;font-weight:bold;color:#fff">Start Scan</div>
<div style="left:105px;top:912.500px;width:62.500px;height:10.300px;background:#e32b3c;border-radius:1px"></div>
<div class="t" style="left:105px;width:62.500px;text-align:center;top:914.800px;font-size:6px;font-weight:bold;color:#fff">Stop Scan</div>
<!-- toolbar -->
<div style="left:175.800px;top:520.800px;width:524.200px;height:11.200px;background:#c2c2c2;border-bottom:0.500px solid #999"></div>
<svg style="left:176px;top:521px;width:300px;height:11px" viewBox="176 521 300 11">
<rect x="176.500" y="521.500" width="10" height="10" fill="#e6e6e6" stroke="#aaa" stroke-width="0.500"/><circle cx="180" cy="525" r="1.500" fill="none" stroke="#49c" stroke-width="0.700"/><path d="M181 526 l3 3" stroke="#49c" stroke-width="0.800"/>
<path d="M228 526 l1.200 1.500 l1.200 -1.500z" fill="#666"/>
<path d="M234 524 h4 l2 2 v4 h-6z" fill="#fff" stroke="#999" stroke-width="0.500"/><path d="M236.500 522.500 h3.500 l1.500 1.500 v4" fill="none" stroke="#bbb" stroke-width="0.500"/>
<path d="M245 524 l4 5 m0 -5 l-4 5" stroke="#bbb" stroke-width="0.700"/>
<rect x="272.500" y="521.800" width="9" height="9.400" fill="#e8eefc" stroke="#7a9ad8" stroke-width="0.500"/>
<path d="M274 527 l4 -4 l2.500 2.500 l-4 4z" fill="#3a7ad0"/><path d="M284 523.500 h5 v5 h-5z M285.500 522.500 h5 v5" fill="#4a82d8" stroke="#2a52a0" stroke-width="0.500"/><path d="M294 529 l5 -5 M296 523.500 l3.500 3.500" stroke="#2a4a90" stroke-width="1.400"/>
<path d="M318 527 l4 -4 l2.500 2.500 l-4 4z" fill="#3a7ad0"/><rect x="328" y="523.500" width="5" height="5" fill="#5a92e8" stroke="#2a52a0" stroke-width="0.500"/>
<path d="M338 529 l3 -5 l2 4" stroke="#c8c8c8" stroke-width="0.700" fill="none"/><circle cx="351" cy="526.500" r="2" fill="none" stroke="#c4c4c4" stroke-width="0.700"/><circle cx="359" cy="526.500" r="2" fill="none" stroke="#c4c4c4" stroke-width="0.700"/>
<path d="M371.500 524 v5 l4.500 -2.500z" fill="#222"/><path d="M380 526 l1 1.200 l1 -1.200z" fill="#777"/>
<path d="M387 529.500 c-1.500 -2 -1 -5 1 -5.500 c2 -0.500 3.500 1 3.500 3 v2.500z" fill="#f0a0a0" stroke="#c66" stroke-width="0.400"/><path d="M387.500 523 l1 -1 M390 522.500 v-1" stroke="#49c" stroke-width="0.600"/>
<path d="M419 526 l1 1.200 l1 -1.200z" fill="#777"/>
</svg>
<div class="t" style="left:189px;top:523.800px;font-size:5.800px;color:#333">Stack A</div>
<div class="t" style="left:253.500px;top:523.800px;font-size:5.800px;color:#a8a8a8">Display</div>
<div class="t" style="left:304.500px;top:523.800px;font-size:5.800px;color:#a8a8a8">Hide</div>
<div class="t" style="left:396px;top:523.800px;font-size:5.800px;color:#555">Viewing</div>
<!-- viewers -->
<svg style="left:175.800px;top:532px;width:524.200px;height:196px" viewBox="175.800 532 524.200 196">
<defs>
<clipPath id="bv1"><rect x="176" y="532" width="173" height="195"/></clipPath>
<clipPath id="bv2"><rect x="351.500" y="532" width="172.200" height="195"/></clipPath>
<clipPath id="bv3"><rect x="526.500" y="532" width="173" height="195"/></clipPath>
</defs>
<rect x="175.800" y="532" width="524.200" height="196" fill="#8c8c8c"/>
<rect x="176" y="532" width="173" height="195" fill="#000"/><rect x="351.500" y="532" width="172.200" height="195" fill="#000"/><rect x="526.500" y="532" width="173.500" height="195.500" fill="#000" stroke="#d98a48" stroke-width="1.400"/>
<defs>
<filter id="gy" x="-5%" y="-5%" width="110%" height="110%" color-interpolation-filters="sRGB">
<feTurbulence type="fractalNoise" baseFrequency="0.2" numOctaves="2" seed="11" result="n"/>
<feColorMatrix in="n" type="matrix" values="0 0 0 0 0  0 0 0 0 0  0 0 0 0 0  8 0 0 0 -4.25" result="m"/>
<feGaussianBlur in="m" stdDeviation="0.35" result="mb"/>
<feFlood flood-color="#5a5a5a" result="w"/>
<feComposite in="w" in2="mb" operator="in" result="wm"/>
<feMerge result="tex"><feMergeNode in="SourceGraphic"/><feMergeNode in="wm"/></feMerge>
<feComposite in="tex" in2="SourceGraphic" operator="in" result="c"/>
<feGaussianBlur in="c" stdDeviation="0.55"/>
</filter>
<filter id="bb1" x="-10%" y="-10%" width="120%" height="120%"><feGaussianBlur stdDeviation="0.6"/></filter>
<filter id="bb2" x="-30%" y="-30%" width="160%" height="160%"><feGaussianBlur stdDeviation="2.500"/></filter>
<filter id="bb3" x="-30%" y="-30%" width="160%" height="160%"><feGaussianBlur stdDeviation="5"/></filter>
</defs>
<g clip-path="url(#bv1)">
<g filter="url(#bb1)">
<path d="M256 574.500 C236 575 219 587 213.500 603 C210 613 212 622 210 629 L191 646.500 C190 650 196 651 199 653 C195 657 196 662 198 666 C196 672 199 680 203 685 C212 690 222 694 226 702 L230 728 L304 728 C304 716 306 704 310 692 C312 680 314 672 318 662 C326 650 330 636 328 622 C325 600 306 583 286 577.500 C276 575 266 574.300 256 574.500Z" fill="#101010" stroke="#2e2e2e" stroke-width="0.800"/>
<path d="M210 629 C212 622 210 613 213.500 603 C219 587 236 575 256 574.500 C266 574.300 276 575 286 577.500 C306 583 325 600 328 622 C330 636 326 650 318 662 C314 672 312 680 310 692" fill="none" stroke="#a8a8a8" stroke-width="1.500"/>
<path d="M256 578.500 C239 579 224 590 218.500 604 C215.500 616 216 626 224 634 C232 638 246 638 254 642 C258 648 264 652 268 658 L270 700 L278 700 L279 664 C290 670 304 668 312 658 C322 646 325 634 323.500 622 C321 603 304 587 286 581.500 C276 579 266 578.300 256 578.500Z" fill="#080808" stroke="#080808" stroke-width="3.500"/>
<path d="M258 583 C272 582 290 584 304 594 C316 604 321 614 321 626" fill="none" stroke="#555" stroke-width="0.800"/>
</g>
<g opacity="0.730">
<path d="M256 580 C240 580.500 226 591 220.500 605 C217.500 616 218.500 625 225 632 C232 636 246 636 254 640 C258 645 262 648 266 652 C272 648 282 646 290 650 C298 640 310 640 318 644 C321 636 322.500 628 321.500 622 C319 604 303 589 286 583.500 C276 581 266 580 256 580Z" fill="#8a8a8a" filter="url(#gy)"/>
<g filter="url(#bb1)">
<ellipse cx="266" cy="608" rx="36" ry="14" fill="#a4a4a4" opacity="0.600" filter="url(#bb2)"/>
<path d="M243 626 C244 609 266 603 283 608 C294 612 298 620 294 627 C291 618 276 609.500 262 611.500 C252 613.500 249 622 247 628Z" fill="#b0b0b0"/>
<path d="M250 627 C254 617 270 614 282 617 C290 621 292 626 286 630 C276 624 262 624 250 627Z" fill="#3a3a3a"/>
<path d="M262 632 C270 628 280 630 284 636 C280 644 270 646 266 640Z" fill="#8c8c8c"/>
<path d="M270 640 C274 636 282 638 284 646 C284 660 280 680 278 700 L270 700 C271 680 270 660 268 650Z" fill="#6e6e6e"/>
<ellipse cx="300" cy="654" rx="15" ry="11" fill="#808080"/>
<path d="M288 654 L312 650 M290 660 L310 658 M292 648 L308 645 M286 650 L300 662" stroke="#4a4a4a" stroke-width="0.700"/>
</g></g>
<g filter="url(#bb1)">
<ellipse cx="232" cy="668" rx="15" ry="8" fill="#2e2e2e" filter="url(#bb2)"/>
<ellipse cx="292" cy="698" rx="11" ry="22" fill="#343434" filter="url(#bb2)"/>
<ellipse cx="258" cy="706" rx="10" ry="18" fill="#1e1e1e" filter="url(#bb2)"/>
<path d="M250 642.500 h4" stroke="#e8e8e8" stroke-width="1.600" fill="none"/>
<path d="M271 652 l2 3" stroke="#e8e8e8" stroke-width="1.400"/>
<path d="M274 668 C277 674 279 678 280 681" stroke="#cfcfcf" stroke-width="1.600" fill="none"/>
<path d="M200 640 C206 640 214 642 220 648 M204 660 C212 658 220 660 226 664 M206 676 C214 676 222 680 228 688" stroke="#3a3a3a" stroke-width="1" fill="none"/>
</g>
</g>
<g clip-path="url(#bv2)">
<g filter="url(#bb1)">
<path d="M438 575.500 C462 575.500 481 596 481.500 622 C482 636 481 646 480 654 C482 668 484 690 484 712 L394 712 C394 690 396 668 397.500 654 C396 646 395.500 636 396 622 C396.500 596 414 575.500 438 575.500Z" fill="#121212"/>
<path d="M397.500 654 C396 646 395.500 636 396 622 C396.500 596 414 575.500 438 575.500 C462 575.500 481 596 481.500 622 C482 636 481 646 480 654" fill="none" stroke="#a4a4a4" stroke-width="1.300"/>
<path d="M438 580 C459 580 476.500 598 477 622 C477.500 636 476 646 474 652 L402 652 C400 646 399.500 636 400 622 C400.500 598 417 580 438 580Z" fill="#080808" stroke="#080808" stroke-width="2.500"/>
</g>
<g opacity="0.850">
<path d="M438 582 C458 582 474.500 599 475 622 C475.500 634 474 642 472 648 C462 652 452 646 446 650 L430 650 C424 646 414 652 404 648 C402 642 401.500 634 402 622 C402.500 599 418 582 438 582Z" fill="#8c8c8c" filter="url(#gy)"/>
<g filter="url(#bb1)">
<ellipse cx="420" cy="614" rx="11" ry="17" fill="#b0b0b0" opacity="0.750" filter="url(#bb2)"/><ellipse cx="456" cy="614" rx="11" ry="17" fill="#b0b0b0" opacity="0.750" filter="url(#bb2)"/>
<path d="M438 582 V612" stroke="#262626" stroke-width="1.200"/>
<path d="M428 612 C432 606 444 606 448 612 C444 610 432 610 428 612Z" fill="#c8c8c8" stroke="#c8c8c8" stroke-width="1"/>
<path d="M429 614 C433 612 436 614 437.500 620 L434 622 C432 618 430 616 429 614Z M447 614 C443 612 440 614 438.500 620 L442 622 C444 618 446 616 447 614Z" fill="#1a1a1a"/>
<ellipse cx="438" cy="628" rx="10" ry="7" fill="#949494"/>
</g></g>
<g filter="url(#bb1)">
<path d="M412 634 l3 4 M462 634 l-3 4" stroke="#e8e8e8" stroke-width="1.600"/>
<path d="M430 646 C434 642 442 642 446 646 M436 646 v5 M440 646 v5" stroke="#e0e0e0" stroke-width="1.200" fill="none"/>
<ellipse cx="438" cy="684" rx="26" ry="20" fill="#262626" filter="url(#bb2)"/>
<path d="M421 656 C420 668 421 680 422 692 M458 656 C459 668 458 680 457 692" stroke="#9c9c9c" stroke-width="1.100" fill="none"/>
<path d="M405 660 C404 676 406 690 408 704 M472 660 C473 676 471 690 469 704" stroke="#303030" stroke-width="2" fill="none"/>
<rect x="380" y="711" width="120" height="4" fill="#000"/>
</g>
</g>
<g clip-path="url(#bv3)"><g transform="rotate(3 612.5 633)">
<g filter="url(#bb1)">
<path d="M612.5 578.5 C633.5 578.5 651.1 608.5 654.5 642.8 C655.8 670.1 635.6 687.5 612.5 687.5 C589.4 687.5 569.2 670.1 570.5 642.8 C573.9 608.5 591.5 578.5 612.5 578.5Z" fill="#161616" stroke="#b4b4b4" stroke-width="1.300"/>
<path d="M612.5 581.1 C632.2 581.1 648.7 609.6 651.9 642.3 C653.1 668.3 634.2 684.9 612.5 684.9 C590.8 684.9 571.9 668.3 573.1 642.3 C576.3 609.6 592.8 581.1 612.5 581.1Z" fill="#080808" stroke="#4a4a4a" stroke-width="0.600"/>
</g>
<g opacity="0.95">
<path d="M612.5 583.1 C631.2 583.1 646.9 610.5 649.9 642.0 C651.0 666.9 633.1 682.9 612.5 682.9 C591.9 682.9 574.0 666.9 575.1 642.0 C578.1 610.5 593.8 583.1 612.5 583.1Z" fill="#909090" filter="url(#gy)"/>
<g filter="url(#bb1)">
<ellipse cx="594.9" cy="636" rx="10.5" ry="30.5" fill="#b6b6b6" opacity="0.850" filter="url(#bb2)"/>
<ellipse cx="630.1" cy="636" rx="10.5" ry="30.5" fill="#b0b0b0" opacity="0.850" filter="url(#bb2)"/>
<path d="M612.5 583.5 V682.5" stroke="#303030" stroke-width="1.100"/>
</g></g>
<g filter="url(#bb1)">
<path d="M613.0 610.1 V626.5" stroke="#e6e6e6" stroke-width="1.200"/>
<circle cx="612.5" cy="683.5" r="1.300" fill="#e8e8e8"/>
</g></g></g>
<!-- planning graphics v1 -->
<g clip-path="url(#bv1)" fill="none">
<rect x="180" y="563" width="157.700" height="124.500" stroke="#a87a2c" stroke-width="1"/>
<rect x="220.500" y="585" width="105.100" height="64.300" stroke="#3f8c3f" stroke-width="0.900"/>
<path d="M220.500 601.700 L263 649.300" stroke="#2fa43a" stroke-width="1.200"/><circle cx="241.600" cy="626" r="2.800" stroke="#2fa43a" stroke-width="0.900"/>
<path d="M180 563 L337.700 626.600" stroke="#f0a320" stroke-width="1.400"/><circle cx="258.400" cy="595" r="2.900" stroke="#f0a320" stroke-width="0.900"/>
<rect x="178.500" y="561.500" width="3" height="3" stroke="#f0a320" stroke-width="0.700"/><rect x="336.200" y="625.100" width="3" height="3" stroke="#f0a320" stroke-width="0.700"/>
<path d="M331.700 693.500 v22" stroke="#3246c8" stroke-width="1"/><path d="M322.500 704.600 h18" stroke="#2fae3a" stroke-width="1"/>
</g>
<!-- planning graphics v2 -->
<g clip-path="url(#bv2)" fill="none">
<path d="M374 565 L498.500 561 L503.700 685 L378.400 689.600Z" stroke="#e8a224" stroke-width="1.300"/>
<path d="M395.500 586.500 L477.500 585 L479 648.500 L397 650Z" stroke="#3f8c3f" stroke-width="0.900"/>
<path d="M436 563 L440.600 687.500" stroke="#f0a320" stroke-width="1.300"/><path d="M436.500 585.500 L438.500 649" stroke="#2fa43a" stroke-width="0.700"/>
<circle cx="436.700" cy="617.600" r="2.800" stroke="#2fa43a" stroke-width="0.900"/><circle cx="438.500" cy="625.700" r="2.900" stroke="#f0a320" stroke-width="0.900"/>
<rect x="434.500" y="561.500" width="3" height="3" stroke="#f0a320" stroke-width="0.700"/><rect x="439.100" y="686" width="3" height="3" stroke="#f0a320" stroke-width="0.700"/>
<path d="M506.700 693.500 v22" stroke="#3246c8" stroke-width="1"/><path d="M497.500 704.600 h18" stroke="#e03030" stroke-width="1"/>
</g>
<!-- planning graphics v3 -->
<g clip-path="url(#bv3)" fill="none">
<path d="M551 547 L677.700 549 L676 706 L549 704Z" stroke="#e8a224" stroke-width="1.300"/>
<path d="M572 587.600 L653.700 589 L652 693.500 L570.500 691Z" stroke="#3f8c3f" stroke-width="0.900"/>
<path d="M613 547.500 L611.600 705" stroke="#f0a320" stroke-width="1.300"/>
<circle cx="613" cy="626" r="2.900" stroke="#f0a320" stroke-width="0.900"/><circle cx="611.600" cy="640" r="2.600" stroke="#2fa43a" stroke-width="0.800"/>
<rect x="611.500" y="546" width="3" height="3" stroke="#f0a320" stroke-width="0.700"/><rect x="610.100" y="703.500" width="3" height="3" stroke="#f0a320" stroke-width="0.700"/>
<path d="M681.300 693.500 v22" stroke="#2fae3a" stroke-width="1"/><path d="M672 704.600 h18" stroke="#e03030" stroke-width="1"/>
</g>
<g font-family="Liberation Sans, sans-serif" font-size="3.800" fill="#e0405a" font-weight="bold">
<text x="328" y="562">194</text><text x="341" y="566.500">194</text><text x="340" y="634.500">201</text><text x="201" y="693">213</text>
<text x="370" y="562">400</text><text x="433" y="559.500">201</text><text x="498" y="557">1</text><text x="376" y="694">400</text><text x="438" y="694">204</text>
<text x="551" y="544">400</text><text x="610" y="544">201</text><text x="547" y="710">400</text><text x="609" y="711">204</text><text x="673" y="712">1</text>
</g>
<g font-family="Liberation Sans, sans-serif" font-size="6.200" fill="#e8d848" font-weight="bold" text-anchor="middle">
<text x="331.700" y="692">H</text><text x="331.700" y="722.500">F</text><text x="316.500" y="707">A</text><text x="346" y="707">P</text><text x="331.700" y="707" font-size="5.500">L</text>
<text x="506.700" y="692">H</text><text x="506.700" y="722.500">F</text><text x="491.500" y="707">R</text><text x="521" y="707">L</text><text x="506.700" y="707" font-size="5.500">A</text>
<text x="681.300" y="692">A</text><text x="681.300" y="722.500">P</text><text x="665.500" y="707">R</text><text x="696" y="707">L</text><text x="681.300" y="707" font-size="5.500">F</text>
</g>
<g fill="#fff"><rect x="176.500" y="613.300" width="3" height="0.900"/><rect x="352" y="613.300" width="3" height="0.900"/><rect x="527.500" y="613.300" width="3" height="0.900"/></g>
</svg>
<div class="t bvt" style="left:177px;top:533px">Scan Nr. 4, 1 - Slice 3/15<br>T1TFE&nbsp; /M</div>
<div class="t bvt" style="left:300px;width:48px;text-align:right;top:533px">MR HJÄRNA<br>2020 12 17</div>
<div class="t bvt" style="left:352.500px;top:533px">Scan Nr. 4, 1 - Slice 8/15<br>T1TFE&nbsp; /M</div>
<div class="t bvt" style="left:475px;width:48px;text-align:right;top:533px">MR HJÄRNA<br>2020 12 17</div>
<div class="t bvt" style="left:528px;top:533px">Scan Nr. 4, 1 - Slice 15/15<br>T1TFE&nbsp; /M</div>
<div class="t bvt" style="left:650px;width:48.500px;text-align:right;top:533px">MR HJÄRNA<br>2020 12 17</div>
<!-- info bar -->
<div style="left:175.800px;top:727.800px;width:524.200px;height:24px;background:#717171"></div>
<div class="t" style="left:177px;top:732.500px;font-size:5.900px;font-weight:bold;color:#fff">T1&nbsp; 3D&nbsp; TFE&nbsp; 1mm</div>
<div class="t ib" style="left:177px;top:740.300px">01:44</div>
<div class="t ib2" style="left:246.700px;top:732.800px">Voxel</div><div class="t ib" style="left:246.700px;top:740.300px">1.00 x 1.01 x 1.00</div>
<div class="t" style="left:279.500px;top:732.800px;font-size:5.400px;font-weight:bold;color:#fff">Sag</div>
<div class="t ib2" style="left:303px;top:732.800px">Rel. SNR</div><div class="t ib" style="left:303px;top:740.300px">1.00</div>
<div class="t ib2" style="left:330px;top:732.800px">TE</div><div class="t ib" style="left:330px;top:740.300px">1.98</div>
<div class="t ib2" style="left:349.700px;top:732.800px">TR</div><div class="t ib" style="left:349.700px;top:740.300px">5.0</div>
<div style="left:373px;top:734.600px;width:10.500px;height:9.500px;background:#d8d8d8;border:0.500px solid #555;border-radius:1px"></div>
<div style="left:385.600px;top:734.600px;width:10.500px;height:9.500px;background:#9c9c9c;border:0.500px solid #666;border-radius:1px"></div>
<div style="left:375px;top:737.500px;width:6.500px;height:3.600px;background:#f0c050;border:0.400px solid #a07820"></div>
<div style="left:387.600px;top:737.500px;width:6.500px;height:3.600px;background:#b8b098;border:0.400px solid #888"></div>
<div style="left:399.500px;top:734.600px;width:33px;height:10px;background:#3fae49;border:0.500px solid #2a7a32;border-radius:1px"></div>
<div class="t" style="left:399.500px;width:33px;text-align:center;top:736.800px;font-size:5.600px;font-weight:bold;color:#fff">Accept</div>
<div class="t ib2" style="left:443.600px;top:732.800px">SAR</div><div class="t ib" style="left:443.600px;top:740.300px">-</div>
<div style="left:479.300px;top:732.500px;width:1.600px;height:12px;background:#444"></div><div style="left:479.300px;top:738.500px;width:1.600px;height:6px;background:#ddd"></div>
<div class="t ib2" style="left:482.600px;top:732.800px">PNS</div><div class="t ib" style="left:482.600px;top:740.300px">51%</div>
<div style="left:650.600px;top:734.600px;width:10px;height:9.500px;background:#d8d8d8;border:0.500px solid #555;border-radius:1px"></div>
<div style="left:652.300px;top:737.500px;width:6.500px;height:3.600px;background:#f0c050;border:0.400px solid #a07820"></div>
<div style="left:665px;top:734.600px;width:28.300px;height:9.500px;background:#dedede;border:0.500px solid #555;border-radius:1px"></div>
<div class="t" style="left:665px;width:28.300px;text-align:center;top:736.800px;font-size:5.600px;color:#444;letter-spacing:0.200px">Cancel</div>
<!-- tabs -->
<div class="tbB" style="left:176px;width:24.4px">Summary</div>
<div class="tbB" style="left:201px;width:24px">Geometry</div>
<div class="tbB act" style="left:226px;width:25.2px">Contrast</div>
<div class="tbB" style="left:251.8px;width:17px">Motion</div>
<div class="tbB" style="left:269.2px;width:23.4px">Dyn/Ang</div>
<div class="tbB" style="left:293px;width:22px">Postproc</div>
<div class="tbB" style="left:315.4px;width:23.2px">Offc/Ang</div>
<div class="tbB" style="left:339px;width:15px">Coils</div>
<div class="tbB" style="left:354.4px;width:22.6px">Conflicts</div>
<div style="left:378.400px;top:753px;width:9px;height:6.500px;background:#dcdcdc;border:0.500px solid #777;border-radius:1px"></div><div class="t" style="left:379.800px;top:753.800px;font-size:4.800px;color:#444;letter-spacing:-0.600px">&lt;&lt;</div>
<div class="tbB" style="left:440px;width:17.7px;font-weight:normal">Info</div>
<div class="tbB" style="left:458.4px;width:30.6px;font-weight:normal">Assistance</div>
<div class="tbB act" style="left:489.6px;width:27.2px;font-weight:normal">AutoView</div>
<div style="left:175.800px;top:760.400px;width:259.500px;height:152.200px;background:#e3e3e3"></div>
<div style="left:300.200px;top:760.400px;width:5.300px;height:152.200px;background:#d2d2d2;border-left:0.500px solid #aaa;border-right:0.500px solid #aaa"></div>
<div style="left:301px;top:793px;width:3.800px;height:64px;background:#b0b0b0"></div>
<div style="left:430.800px;top:760.400px;width:4.800px;height:152.200px;background:#d2d2d2;border-left:0.500px solid #aaa"></div>
<div style="left:431.600px;top:767px;width:3.400px;height:139px;background:#b0b0b0"></div>
<div class="t" style="left:300.600px;top:761px;font-size:4px;color:#333">▲</div><div class="t" style="left:300.600px;top:907.500px;font-size:4px;color:#333">▼</div><div class="t" style="left:431px;top:761px;font-size:4px;color:#333">▲</div><div class="t" style="left:431px;top:907.500px;font-size:4px;color:#333">▼</div>
<div style="left:175.800px;top:767.82px;width:124.400px;height:0.500px;background:#d0d0d0"></div>
<div class="t lr" style="left:177px;top:762.00px;color:#747474;">Echoes</div><div class="t lr" style="left:245px;top:762.00px;color:#747474;">1</div>
<div style="left:175.800px;top:775.44px;width:124.400px;height:0.500px;background:#d0d0d0"></div>
<div class="t lr" style="left:182px;top:769.62px;color:#747474;">partial echo</div><div class="t lr" style="left:245px;top:769.62px;color:#747474;">no</div>
<div style="left:175.800px;top:783.06px;width:124.400px;height:0.500px;background:#d0d0d0"></div>
<div class="t lr" style="left:182px;top:777.24px;color:#747474;">shifted echo</div><div class="t lr" style="left:245px;top:777.24px;color:#747474;">no</div>
<div style="left:175.800px;top:790.68px;width:124.400px;height:0.500px;background:#d0d0d0"></div>
<div class="t lr" style="left:177px;top:784.86px;color:#747474;">TE</div><div class="t lr" style="left:245px;top:784.86px;color:#747474;">shortest</div>
<div style="left:175.800px;top:798.30px;width:124.400px;height:0.500px;background:#d0d0d0"></div>
<div class="t lr" style="left:177px;top:792.48px;color:#747474;">Flip angle (deg)</div><div class="t lr" style="left:245px;top:792.48px;color:#747474;">6</div>
<div style="left:175.800px;top:805.92px;width:124.400px;height:0.500px;background:#d0d0d0"></div>
<div class="t lr" style="left:177px;top:800.10px;color:#747474;">TR</div><div class="t lr" style="left:245px;top:800.10px;color:#747474;">user defined</div>
<div style="left:175.800px;top:813.54px;width:124.400px;height:0.500px;background:#d0d0d0"></div>
<div class="t lr" style="left:182px;top:807.72px;color:#747474;">(ms)</div><div class="t lr" style="left:245px;top:807.72px;color:#747474;">5</div>
<div style="left:175.800px;top:821.16px;width:124.400px;height:0.500px;background:#d0d0d0"></div>
<div class="t lr" style="left:177px;top:815.34px;color:#747474;">Halfscan</div><div class="t lr" style="left:245px;top:815.34px;color:#747474;">no</div>
<div style="left:175.800px;top:828.78px;width:124.400px;height:0.500px;background:#d0d0d0"></div>
<div class="t lr" style="left:177px;top:822.96px;color:#747474;">Water-fat shift</div><div class="t lr" style="left:245px;top:822.96px;color:#747474;">user defined</div>
<div style="left:175.800px;top:836.40px;width:124.400px;height:0.500px;background:#d0d0d0"></div>
<div class="t lr" style="left:182px;top:830.58px;color:#747474;">(pixels)</div><div class="t lr" style="left:245px;top:830.58px;color:#747474;">2</div>
<div style="left:175.800px;top:844.02px;width:124.400px;height:0.500px;background:#d0d0d0"></div>
<div class="t lr" style="left:177px;top:838.20px;color:#747474;font-weight:bold;color:#222;">Shim</div><div class="t lr" style="left:245px;top:838.20px;color:#747474;font-weight:bold;color:#222;">volume <span style="font-weight:normal;color:#8a8a8a">&nbsp;(shimtool)</span></div>
<div style="left:175.800px;top:844.52px;width:124.400px;height:7.62px;background:#78a5e2"></div>
<div class="t lr" style="left:177px;top:845.82px;color:#dfe8f8;">ShimAlign</div><div class="t lr" style="left:245px;top:845.82px;color:#dfe8f8;">no</div>
<div style="left:175.800px;top:859.26px;width:124.400px;height:0.500px;background:#d0d0d0"></div>
<div class="t lr" style="left:177px;top:853.44px;color:#747474;">mDIXON</div><div class="t lr" style="left:245px;top:853.44px;color:#747474;">no</div>
<div style="left:175.800px;top:866.88px;width:124.400px;height:0.500px;background:#d0d0d0"></div>
<div class="t lr" style="left:177px;top:861.06px;color:#747474;">Fat suppression</div><div class="t lr" style="left:245px;top:861.06px;color:#747474;">no</div>
<div style="left:175.800px;top:874.50px;width:124.400px;height:0.500px;background:#d0d0d0"></div>
<div class="t lr" style="left:177px;top:868.68px;color:#747474;">Water suppression</div><div class="t lr" style="left:245px;top:868.68px;color:#747474;">no</div>
<div style="left:175.800px;top:882.12px;width:124.400px;height:0.500px;background:#d0d0d0"></div>
<div class="t lr" style="left:177px;top:876.30px;color:#747474;">TFE prepulse</div><div class="t lr" style="left:245px;top:876.30px;color:#747474;">invert</div>
<div style="left:175.800px;top:889.74px;width:124.400px;height:0.500px;background:#d0d0d0"></div>
<div class="t lr" style="left:182px;top:883.92px;color:#747474;">+pulse parameter cont...</div><div class="t lr" style="left:245px;top:883.92px;color:#747474;">+default</div>
<div style="left:175.800px;top:897.36px;width:124.400px;height:0.500px;background:#d0d0d0"></div>
<div class="t lr" style="left:182px;top:891.54px;color:#747474;">slice selection</div><div class="t lr" style="left:245px;top:891.54px;color:#747474;">no</div>
<div style="left:175.800px;top:904.98px;width:124.400px;height:0.500px;background:#d0d0d0"></div>
<div class="t lr" style="left:182px;top:899.16px;color:#747474;">delay</div><div class="t lr" style="left:245px;top:899.16px;color:#747474;">user defined</div>
<div style="left:175.800px;top:912.60px;width:124.400px;height:0.500px;background:#d0d0d0"></div>
<div class="t lr" style="left:187px;top:906.78px;color:#747474;">(ms)</div><div class="t lr" style="left:245px;top:906.78px;color:#747474;">1200</div>
<div style="left:306px;top:767.82px;width:124.800px;height:0.500px;background:#d4d4d4"></div>
<div class="t lr" style="left:307px;top:762.00px;color:#8c8c8c">Research Options used</div><div class="t lr" style="left:375.600px;top:762.00px;color:#999">4</div>
<div style="left:306px;top:775.44px;width:124.800px;height:0.500px;background:#d4d4d4"></div>
<div class="t lr" style="left:307px;top:769.62px;color:#8c8c8c">Total scan duration</div><div class="t lr" style="left:375.600px;top:769.62px;color:#999">01:43.8</div>
<div style="left:306px;top:783.06px;width:124.800px;height:0.500px;background:#d4d4d4"></div>
<div class="t lr" style="left:307px;top:777.24px;color:#8c8c8c">Rel. SNR</div><div class="t lr" style="left:375.600px;top:777.24px;color:#999">1</div>
<div style="left:306px;top:790.68px;width:124.800px;height:0.500px;background:#d4d4d4"></div>
<div class="t lr" style="left:307px;top:784.86px;color:#8c8c8c">Act. TR/TE (ms)</div><div class="t lr" style="left:375.600px;top:784.86px;color:#999">5.0 / 1.98</div>
<div style="left:306px;top:798.30px;width:124.800px;height:0.500px;background:#d4d4d4"></div>
<div class="t lr" style="left:307px;top:792.48px;color:#8c8c8c">ACQ matrix M x P</div><div class="t lr" style="left:375.600px;top:792.48px;color:#999">200 x 250</div>
<div style="left:306px;top:805.92px;width:124.800px;height:0.500px;background:#d4d4d4"></div>
<div class="t lr" style="left:307px;top:800.10px;color:#8c8c8c">ACQ voxel MPS (mm)</div><div class="t lr" style="left:375.600px;top:800.10px;color:#999">1.00 / 1.01 / 1.00</div>
<div style="left:306px;top:813.54px;width:124.800px;height:0.500px;background:#d4d4d4"></div>
<div class="t lr" style="left:307px;top:807.72px;color:#8c8c8c">REC voxel MPS (mm)</div><div class="t lr" style="left:375.600px;top:807.72px;color:#999">0.87 / 0.87 / 0.50</div>
<div style="left:306px;top:821.16px;width:124.800px;height:0.500px;background:#d4d4d4"></div>
<div class="t lr" style="left:307px;top:815.34px;color:#8c8c8c">Scan percentage (%)</div><div class="t lr" style="left:375.600px;top:815.34px;color:#999">99.2</div>
<div style="left:306px;top:828.78px;width:124.800px;height:0.500px;background:#d4d4d4"></div>
<div class="t lr" style="left:307px;top:822.96px;color:#8c8c8c">TFE shots</div><div class="t lr" style="left:375.600px;top:822.96px;color:#999">30</div>
<div style="left:306px;top:836.40px;width:124.800px;height:0.500px;background:#d4d4d4"></div>
<div class="t lr" style="left:307px;top:830.58px;color:#8c8c8c">TFE dur. shot / acq (ms)</div><div class="t lr" style="left:375.600px;top:830.58px;color:#999">2338.0 / 2250.0</div>
<div style="left:306px;top:844.02px;width:124.800px;height:0.500px;background:#d4d4d4"></div>
<div class="t lr" style="left:307px;top:838.20px;color:#8c8c8c">Min. TI delay</div><div class="t lr" style="left:375.600px;top:838.20px;color:#999">1157.8</div>
<div style="left:306px;top:851.64px;width:124.800px;height:0.500px;background:#d4d4d4"></div>
<div class="t lr" style="left:307px;top:845.82px;color:#8c8c8c">Act. WFS (pix) / BW (Hz)</div><div class="t lr" style="left:375.600px;top:845.82px;color:#999">2.015 / 502.9</div>
<div style="left:306px;top:859.26px;width:124.800px;height:0.500px;background:#d4d4d4"></div>
<div class="t lr" style="left:307px;top:853.44px;color:#8c8c8c">Min. WFS (pix) / Max. BW...</div><div class="t lr" style="left:375.600px;top:853.44px;color:#999">0.886 / 1143.8</div>
<div style="left:306px;top:866.88px;width:124.800px;height:0.500px;background:#d4d4d4"></div>
<div class="t lr" style="left:307px;top:861.06px;color:#8c8c8c">Min. TR/TE (ms)</div><div class="t lr" style="left:375.600px;top:861.06px;color:#999">4.5 / 1.98</div>
<div style="left:306px;top:874.50px;width:124.800px;height:0.500px;background:#d4d4d4"></div>
<div class="t lr" style="left:307px;top:868.68px;color:#8c8c8c">RF avg power computed...</div><div class="t lr" style="left:375.600px;top:868.68px;color:#999">5.0W (max = 33.0W)</div>
<div style="left:306px;top:882.12px;width:124.800px;height:0.500px;background:#d4d4d4"></div>
<div class="t lr" style="left:307px;top:876.30px;color:#8c8c8c">SAR / head</div><div class="t lr" style="left:375.600px;top:876.30px;color:#999">&lt; 32 %</div>
<div style="left:306px;top:889.74px;width:124.800px;height:0.500px;background:#d4d4d4"></div>
<div class="t lr" style="left:307px;top:883.92px;color:#8c8c8c">Head / level</div><div class="t lr" style="left:375.600px;top:883.92px;color:#999">&lt; 1.0 W/kg / normal</div>
<div style="left:306px;top:897.36px;width:124.800px;height:0.500px;background:#d4d4d4"></div>
<div class="t lr" style="left:307px;top:891.54px;color:#8c8c8c">SED</div><div class="t lr" style="left:375.600px;top:891.54px;color:#999">&nbsp; 0.0 kJ/kg</div>
<div style="left:306px;top:904.98px;width:124.800px;height:0.500px;background:#d4d4d4"></div>
<div class="t lr" style="left:307px;top:899.16px;color:#8c8c8c">B1+rms</div><div class="t lr" style="left:375.600px;top:899.16px;color:#999">0.75 uT</div>
<div style="left:306px;top:912.60px;width:124.800px;height:0.500px;background:#d4d4d4"></div>
<div class="t lr" style="left:307px;top:906.78px;color:#8c8c8c">Max B1+rms</div><div class="t lr" style="left:375.600px;top:906.78px;color:#999">0.75 uT</div>
<div style="left:175.800px;top:912.600px;width:524.200px;height:3.400px;background:#8c8c8c"></div>
<div style="left:175.800px;top:916px;width:260px;height:8.500px;background:#dcdcdc"></div>
<div style="left:438.500px;top:760.400px;width:261.500px;height:164.100px;background:#d9d9d9;border:0.600px solid #999"></div>
<div style="left:440px;top:769.800px;width:257.500px;height:154.500px;background:#000;border:0.800px solid #3c6cd2"></div>
<svg style="left:440.800px;top:770.600px;width:256px;height:153px" viewBox="440.800 770.600 256 153"><g ><g transform="rotate(-4 568 848.5)">
<g filter="url(#bb1)">
<path d="M568 797.5 C588.2 797.5 605.3 825.5 608.5 857.7 C609.7 883.2 590.3 899.5 568 899.5 C545.7 899.5 526.3 883.2 527.5 857.7 C530.7 825.5 547.8 797.5 568 797.5Z" fill="#161616" stroke="#b4b4b4" stroke-width="1.300"/>
<path d="M568 800.1 C587.0 800.1 602.9 826.7 605.9 857.2 C607.0 881.4 588.8 896.9 568 896.9 C547.2 896.9 529.0 881.4 530.1 857.2 C533.1 826.7 549.0 800.1 568 800.1Z" fill="#080808" stroke="#4a4a4a" stroke-width="0.600"/>
</g>
<g opacity="0.95">
<path d="M568 802.1 C586.0 802.1 601.0 827.6 603.9 856.9 C605.0 880.1 587.7 894.9 568 894.9 C548.3 894.9 531.0 880.1 532.1 856.9 C535.0 827.6 550.0 802.1 568 802.1Z" fill="#909090" filter="url(#gy)"/>
<g filter="url(#bb1)">
<ellipse cx="551.0" cy="851.5" rx="10.1" ry="28.6" fill="#b6b6b6" opacity="0.850" filter="url(#bb2)"/>
<ellipse cx="585.0" cy="851.5" rx="10.1" ry="28.6" fill="#b0b0b0" opacity="0.850" filter="url(#bb2)"/>
<path d="M568 802.5 V894.5" stroke="#303030" stroke-width="1.100"/>
</g></g>
<g filter="url(#bb1)">
<path d="M568.5 827.1 V842.4" stroke="#e6e6e6" stroke-width="1.200"/>
<circle cx="568" cy="895.5" r="1.300" fill="#e8e8e8"/>
</g></g></g>
<path d="M670 893.500 v22" stroke="#2fae3a" stroke-width="1"/><path d="M661 904.600 h18" stroke="#e03030" stroke-width="1"/>
<g font-family="Liberation Sans, sans-serif" font-size="5.600" fill="#e8d848" font-weight="bold" text-anchor="middle"><text x="670" y="893">A</text><text x="670" y="920.500">P</text><text x="656" y="906.600">R</text><text x="684" y="906.600">L</text><text x="670" y="906.400" font-size="4.600">F</text></g>
</svg>
<div class="t" style="left:442px;top:771px;font-size:3.900px;line-height:5px;color:#fff;font-weight:bold">Survey 3plan_40s_isoc<br>Slice 55<br>FFE&nbsp; /M</div>


</div>

<div id="pc" class="ab" style="left:0;top:0;width:700px;height:1358px">
<div style="left:34.500px;top:952px;width:665.500px;height:406px;background:#6a7ab4"></div>
<div style="left:34.500px;top:950.300px;width:488px;height:27.200px;background:#2c3b78"></div>
<div style="left:34.500px;top:977.500px;width:488px;height:2.500px;background:#8b98cc"></div>
<div style="left:36px;top:952.600px;width:32px;height:22.800px;background:#324180;border:0.800px solid #6f7dba;border-right-color:#1c2858;border-bottom-color:#1c2858;border-radius:1.500px"></div>
<div style="left:71px;top:952.600px;width:32.5px;height:22.800px;background:#324180;border:0.800px solid #6f7dba;border-right-color:#1c2858;border-bottom-color:#1c2858;border-radius:1.500px"></div>
<div style="left:106.5px;top:952.600px;width:31.5px;height:22.800px;background:#324180;border:0.800px solid #6f7dba;border-right-color:#1c2858;border-bottom-color:#1c2858;border-radius:1.500px"></div>
<svg style="left:36px;top:952px;width:104px;height:24px" viewBox="36 952 104 24">
<path d="M43 959 h16 l2 2 v9 h-18z" fill="#e4e4e4" stroke="#444" stroke-width="0.600"/><path d="M43 961 h18 M45 963 v7 M49 963 v7 M53 963 v7 M57 963 v7" stroke="#666" stroke-width="0.800"/><path d="M60 966 v7 l2 -1.500 l1.200 2.200 l1 -0.500 l-1.200 -2.200 h2.400z" fill="#fff" stroke="#222" stroke-width="0.500"/>
<rect x="78" y="957" width="13" height="13" fill="#d8d8d8" stroke="#333" stroke-width="0.600"/><path d="M80 959 h3 v3 h-3z M85 959 h4 M80 964 h5 v4 h-5z M87 963 v5" stroke="#222" stroke-width="1" fill="#555"/><rect x="94" y="959" width="4" height="3" fill="#eee"/><rect x="94" y="964.500" width="4" height="4.500" fill="#e8d48a"/>
<path d="M114 961 c2 -3 6 -3 8 -1 l-3 2 l2 2 l9 5 l-1.500 2 l-9 -5 l-3 1 c-2 -1 -3 -4 -2.500 -6z" fill="#d8d8d8" stroke="#555" stroke-width="0.500"/><path d="M114 970 l10 -6" stroke="#ddd" stroke-width="1.800"/><path d="M130.500 973.500 h3 l-1.500 1.800z" fill="#ddd"/>
</svg>
<div style="left:34.500px;top:980px;width:128.500px;height:9.600px;background:#2c3a7c"></div>
<div style="left:34.500px;top:989.600px;width:128.500px;height:7.400px;background:#5c6cac"></div>
<div class="t" style="left:36px;top:982.300px;font-size:6.600px;font-weight:bold;color:#fff;letter-spacing:-0.100px">317 MS Oct 2020 V3</div>
<div class="t" style="left:130px;width:32px;text-align:right;top:982.300px;font-size:6.600px;font-weight:bold;color:#fff">50:27</div>
<div class="t" style="left:36.500px;top:991px;font-size:4.800px;font-weight:bold;color:#2c3870">Exam&nbsp;&nbsp; Edit</div>
<div class="t" style="left:140px;width:21px;text-align:right;top:991px;font-size:4.800px;font-weight:bold;color:#2c3870">End</div>
<div style="left:34.500px;top:997px;width:128.500px;height:11px;background:#1c2462"></div>
<svg style="left:34.500px;top:997px;width:75px;height:10.500px" viewBox="34.500 997 75 10.500"><path d="M34.500 1007.500 V998.500 H57 L61.500 1007.500Z" fill="#a6b2da"/><path d="M62 998.500 H101 L106 1007.500 H66.500Z" fill="#3a4a92" stroke="#6a7ab8" stroke-width="0.500"/></svg>
<div class="t" style="left:40px;top:1000px;font-size:6px;color:#223">Task</div>
<div class="t" style="left:67.500px;top:1000px;font-size:6px;font-weight:bold;color:#fff">Series Data</div>
<div style="left:34.500px;top:1007.500px;width:128.500px;height:11px;background:#7080ba"></div>
<div style="left:35px;top:1008.600px;width:26.5px;height:9px;background:#8d9bcc;border:0.500px solid #a4b0dc;border-right-color:#5a6aa8;border-bottom-color:#5a6aa8"></div>
<div class="t" style="left:35px;width:26.5px;text-align:center;top:1011.400px;font-size:4.800px;font-weight:bold;color:#3a4680">Status</div>
<div style="left:62.5px;top:1008.600px;width:74px;height:9px;background:#8d9bcc;border:0.500px solid #a4b0dc;border-right-color:#5a6aa8;border-bottom-color:#5a6aa8"></div>
<div class="t" style="left:62.5px;width:74px;text-align:center;top:1011.400px;font-size:4.800px;font-weight:bold;color:#3a4680">Description</div>
<div style="left:137.5px;top:1008.600px;width:25px;height:9px;background:#8d9bcc;border:0.500px solid #a4b0dc;border-right-color:#5a6aa8;border-bottom-color:#5a6aa8"></div>
<div class="t" style="left:137.5px;width:25px;text-align:center;top:1011.400px;font-size:4.800px;font-weight:bold;color:#3a4680">Time</div>
<div style="left:34.500px;top:1018.4px;width:128.500px;height:134.4px;background:#cad2ea"></div>
<div style="left:34.500px;top:1018.4px;width:128.500px;height:10.2px;background:#bac4e2"></div>
<div class="t" style="left:35.500px;top:1020.8px;font-size:5.600px;color:#7c86a6;">Done</div>
<div class="t" style="left:66px;top:1020.8px;font-size:5.600px;color:#7c86a6;letter-spacing:-0.050px">1: 3Plane Loc FGRE</div>
<div class="t" style="left:142.600px;top:1020.8px;font-size:5.600px;color:#a8b0c8;">00:24</div>
<div style="left:34.500px;top:1028.6px;width:128.500px;height:10.2px;background:#cad2ea"></div>
<div class="t" style="left:35.500px;top:1031.0px;font-size:5.600px;color:#7c86a6;">Done</div>
<div class="t" style="left:66px;top:1031.0px;font-size:5.600px;color:#7c86a6;letter-spacing:-0.050px">2: ASSET Cal</div>
<div class="t" style="left:142.600px;top:1031.0px;font-size:5.600px;color:#a8b0c8;">00:12</div>
<div style="left:34.500px;top:1038.8px;width:128.500px;height:10.2px;background:#f5e6a6"></div>
<div class="t" style="left:35.500px;top:1041.2px;font-size:5.600px;color:#111;font-weight:bold;">ACT</div>
<div class="t" style="left:67px;top:1041.2px;font-size:5.600px;color:#111;font-weight:bold;letter-spacing:-0.050px">Ax BRAVO T1</div>
<div class="t" style="left:142.600px;top:1041.2px;font-size:5.600px;color:#111;font-weight:bold;">04:24</div>
<div style="left:34.500px;top:1049.0px;width:128.500px;height:10.2px;background:#cad2ea"></div>
<div class="t" style="left:67px;top:1051.4px;font-size:5.600px;color:#5e6888;letter-spacing:-0.050px">7T FLAIR hsT2 TR10</div>
<div class="t" style="left:142.600px;top:1051.4px;font-size:5.600px;color:#5e6888;">05:24</div>
<div style="left:34.500px;top:1059.2px;width:128.500px;height:10.2px;background:#bac4e2"></div>
<div class="t" style="left:67px;top:1061.6px;font-size:5.600px;color:#5e6888;letter-spacing:-0.050px">Sag CUBE T2</div>
<div class="t" style="left:142.600px;top:1061.6px;font-size:5.600px;color:#5e6888;">03:28</div>
<div style="left:34.500px;top:1069.4px;width:128.500px;height:10.2px;background:#cad2ea"></div>
<div class="t" style="left:67px;top:1071.8px;font-size:5.600px;color:#5e6888;letter-spacing:-0.050px">Ax SWAN 1mm overall b...</div>
<div class="t" style="left:142.600px;top:1071.8px;font-size:5.600px;color:#5e6888;">07:21</div>
<div style="left:34.500px;top:1079.6px;width:128.500px;height:10.2px;background:#bac4e2"></div>
<div class="t" style="left:67px;top:1082.0px;font-size:5.600px;color:#5e6888;letter-spacing:-0.050px">Ax SWAN QSM</div>
<div class="t" style="left:142.600px;top:1082.0px;font-size:5.600px;color:#5e6888;">09:12</div>
<div style="left:34.500px;top:1089.8px;width:128.500px;height:10.2px;background:#cad2ea"></div>
<div class="t" style="left:67px;top:1092.2px;font-size:5.600px;color:#5e6888;letter-spacing:-0.050px">Cor WMn MPRAGE TI680...</div>
<div class="t" style="left:142.600px;top:1092.2px;font-size:5.600px;color:#5e6888;">07:26</div>
<div style="left:34.500px;top:1100.0px;width:128.500px;height:10.2px;background:#bac4e2"></div>
<div class="t" style="left:67px;top:1102.4px;font-size:5.600px;color:#5e6888;letter-spacing:-0.050px">Cor GMn MPRAGE TI950...</div>
<div class="t" style="left:142.600px;top:1102.4px;font-size:5.600px;color:#5e6888;">05:18</div>
<div style="left:34.500px;top:1110.2px;width:128.500px;height:10.2px;background:#cad2ea"></div>
<div class="t" style="left:67px;top:1112.6px;font-size:5.600px;color:#5e6888;letter-spacing:-0.050px">Sag MP2RAGE TI800/27...</div>
<div class="t" style="left:142.600px;top:1112.6px;font-size:5.600px;color:#5e6888;">07:54</div>
<div style="left:62.300px;top:1061.7px;width:3.400px;height:4.600px;background:#eef;border:0.500px solid #3a4a9a"></div>
<div style="left:34.5px;top:1152.800px;width:43px;height:13.500px;background:#8f9dcc;border:0.600px solid #b8c2e4;border-right-color:#4a5890;border-bottom-color:#4a5890"></div>
<div class="t" style="left:34.5px;width:43px;text-align:center;top:1158.200px;font-size:4.800px;font-weight:bold;color:#1c2458;letter-spacing:0.150px">Setup</div>
<div style="left:77.5px;top:1152.800px;width:43.3px;height:13.500px;background:#93a1cf;border:0.600px solid #b8c2e4;border-right-color:#4a5890;border-bottom-color:#4a5890"></div>
<div class="t" style="left:77.5px;width:43.3px;text-align:center;top:1158.200px;font-size:4.800px;font-weight:bold;color:#1c2458;letter-spacing:0.150px">Add Task ▸</div>
<div style="left:120.8px;top:1152.800px;width:42.2px;height:13.500px;background:#6878b0;border:0.600px solid #b8c2e4;border-right-color:#4a5890;border-bottom-color:#4a5890"></div>
<div class="t" style="left:120.8px;width:42.2px;text-align:center;top:1158.200px;font-size:4.800px;font-weight:bold;color:#8a98c8;letter-spacing:0.150px">Run</div>
<div style="left:34.500px;top:1166.300px;width:43px;height:13.500px;background:#6b7bb3;border:0.600px solid #8d9bcb;border-right-color:#3a4880;border-bottom-color:#3a4880"></div>
<div class="t" style="left:34.500px;width:43px;text-align:center;top:1171.600px;font-size:4.800px;font-weight:bold;color:#8a98c8">View</div>
<div class="t" style="left:110px;width:52.500px;text-align:right;top:1175.300px;font-size:5.200px;font-weight:bold;color:#f09040">Research Mode</div>
<div style="left:37.700px;top:1191.500px;width:4.800px;height:4.800px;background:#d4d8e8;box-shadow:0 0 0 0.5px #8890b0"></div>
<div class="t" style="left:48px;top:1191.600px;font-size:4.800px;font-weight:bold;color:#1c2458;letter-spacing:0.150px">Auto Scan</div>
<div style="left:99px;top:1184.200px;width:55.800px;height:12.400px;background:#8f9dcc;border:0.600px solid #c0c8e8;border-right-color:#4a5890;border-bottom-color:#4a5890"></div>
<div class="t" style="left:99px;width:55.800px;text-align:center;top:1188.800px;font-size:4.800px;font-weight:bold;color:#1c2458;letter-spacing:0.150px">Scan</div>
<div style="left:154.800px;top:1184.200px;width:8.200px;height:12.400px;background:#8f9dcc;border:0.600px solid #c0c8e8;border-right-color:#4a5890;border-bottom-color:#4a5890"></div>
<div class="t" style="left:156.600px;top:1187.600px;font-size:4.500px;color:#111">▼</div>
<div style="left:34.500px;top:1196.800px;width:128.500px;height:0.800px;background:#a4b0dc"></div>
<div style="left:63px;top:1205px;width:70.6px;height:15px;background:#6b7bb3;border:0.700px solid #8d9bcb;border-right-color:#46548c;border-bottom-color:#46548c;border-radius:1px"></div>
<div class="t" style="left:63px;width:70.6px;text-align:center;top:1210.0px;font-size:5px;line-height:5.400px;font-weight:bold;color:#8a98c8">Save Rx</div>
<div style="left:37.5px;top:1238px;width:54px;height:15px;background:#6b7bb3;border:0.700px solid #8d9bcb;border-right-color:#46548c;border-bottom-color:#46548c;border-radius:1px"></div>
<div class="t" style="left:37.5px;width:54px;text-align:center;top:1243.0px;font-size:5px;line-height:5.400px;font-weight:bold;color:#8a98c8">Coils...</div>
<div class="t" style="left:43.500px;top:1254.800px;font-size:4.800px;font-weight:bold;color:#fff">RM:Nova32Ch Head</div>
<svg style="left:99px;top:1237.400px;width:52.600px;height:17.200px" viewBox="99 1237.400 52.600 17.200"><rect x="99" y="1237.400" width="52.600" height="17.200" fill="#eef0f4"/><ellipse cx="106" cy="1246" rx="4.500" ry="7.500" fill="#cfd3dc" stroke="#8a8f9c" stroke-width="0.600"/><ellipse cx="106" cy="1246" rx="2.200" ry="4.500" fill="#9aa0ae"/><path d="M110 1248.500 h32 M112 1247 c4 -2.500 8 -2.500 12 -1 l14 0.500 l3 1" stroke="#555" stroke-width="0.900" fill="none"/><path d="M110 1250 h36" stroke="#8a8f9c" stroke-width="1.400"/><path d="M126 1238.500 v3.600 M124.200 1240.300 h3.600 M147.500 1244 v3.600 M145.700 1245.800 h3.600" stroke="#333" stroke-width="0.600"/></svg>
<div class="t" style="left:99px;top:1255.800px;font-size:4.800px;font-weight:bold;color:#fff">Head First, Supine</div>
<div style="left:37.5px;top:1276.5px;width:54px;height:15px;background:#6b7bb3;border:0.700px solid #8d9bcb;border-right-color:#46548c;border-bottom-color:#46548c;border-radius:1px"></div>
<div class="t" style="left:37.5px;width:54px;text-align:center;top:1278.8px;font-size:5px;line-height:5.400px;font-weight:bold;color:#fff">Imaging<br>Options...</div>
<div class="t" style="left:37px;top:1293.800px;font-size:4.800px;line-height:6.300px;font-weight:bold;color:#fff">3D&nbsp;&nbsp;&nbsp;&nbsp; BRAVO<br>EDR, Fast, IrP, ARC</div>
<div style="left:163px;top:980px;width:1.500px;height:350px;background:#8b98cc"></div>
<svg style="left:164.500px;top:980px;width:355px;height:348px" viewBox="164.500 980 355 348">
<defs>
<filter id="gy2" x="-5%" y="-5%" width="110%" height="110%" color-interpolation-filters="sRGB">
<feTurbulence type="fractalNoise" baseFrequency="0.16" numOctaves="2" seed="5" result="n"/>
<feColorMatrix in="n" type="matrix" values="0 0 0 0 0  0 0 0 0 0  0 0 0 0 0  8 0 0 0 -4.5" result="m"/>
<feGaussianBlur in="m" stdDeviation="0.4" result="mb"/>
<feFlood flood-color="#8a8a8a" result="w"/>
<feComposite in="w" in2="mb" operator="in" result="wm"/>
<feMerge result="tex"><feMergeNode in="SourceGraphic"/><feMergeNode in="wm"/></feMerge>
<feComposite in="tex" in2="SourceGraphic" operator="in" result="c"/>
<feGaussianBlur in="c" stdDeviation="0.7"/>
</filter>
<filter id="bbm" x="-20%" y="-20%" width="140%" height="140%"><feGaussianBlur stdDeviation="1.1"/></filter>
<clipPath id="cc1"><rect x="164.500" y="980" width="176.500" height="173.500"/></clipPath>
<clipPath id="cc2"><rect x="342.500" y="981" width="170.500" height="171.500"/></clipPath>
<clipPath id="cc3"><rect x="341.500" y="1155" width="176.200" height="171.600"/></clipPath>
</defs>
<rect x="164.500" y="980" width="355" height="348" fill="#6a7ab4"/>
<rect x="164.500" y="980" width="176.500" height="173.500" fill="#0a0d0c"/>
<rect x="341.900" y="980.500" width="171.500" height="172.700" fill="#0a0d0c" stroke="#d6cf43" stroke-width="1.100"/>
<rect x="341.500" y="1155" width="176.200" height="171.600" fill="#0a0d0c"/>
<rect x="514" y="980" width="5" height="173.500" fill="#2c3b78"/><rect x="514.500" y="1066" width="4" height="4" fill="#4d5d9a" stroke="#8e9ace" stroke-width="0.400"/>
<!-- c1 coronal -->
<g clip-path="url(#cc1)">
<g filter="url(#bb1)">
<path d="M258 1014.500 C292 1014.500 316 1040 316.500 1072 C317 1090 313 1100 310 1110 C310 1124 311 1140 312 1154 L204 1154 C205 1140 206 1124 206 1110 C203 1100 199 1090 199.500 1072 C200 1040 224 1014.500 258 1014.500Z" fill="#151716" stroke="#474a49" stroke-width="1.200"/>
<path d="M258 1019 C288 1019 311.500 1042 312 1072 C312.500 1088 309 1098 305 1106 L211 1106 C207 1098 203.500 1088 204 1072 C204.500 1042 228 1019 258 1019Z" fill="none" stroke="#323534" stroke-width="1"/>
</g>
<g opacity="0.620">
<path d="M258 1024 C285 1024 306.500 1045 307 1072 C307.500 1086 304 1094 300 1100 C290 1108 276 1100 266 1104 L250 1104 C240 1100 226 1108 216 1100 C212 1094 208.500 1086 209 1072 C209.500 1045 231 1024 258 1024Z" fill="#5a5a5a" filter="url(#gy2)"/>
<g filter="url(#bb1)">
<ellipse cx="226" cy="1076" rx="14" ry="18" fill="#7a7a7a" opacity="0.600" filter="url(#bb2)"/><ellipse cx="290" cy="1076" rx="14" ry="18" fill="#7a7a7a" opacity="0.600" filter="url(#bb2)"/>
<path d="M258 1026 V1066" stroke="#2a2a2a" stroke-width="1.200"/>
<path d="M246 1060 C250 1057 255 1059 257.500 1063 C260 1059 266 1057 270 1060 C266 1062 260 1064 257.500 1068 C255 1064 250 1062 246 1060Z" fill="#b0b0b0" filter="url(#bbm)"/>
<ellipse cx="258" cy="1052" rx="9" ry="4" fill="#3a3a3a" filter="url(#bbm)"/>
</g></g>
<g filter="url(#bb1)">
<ellipse cx="258" cy="1126" rx="40" ry="22" fill="#222423" filter="url(#bb2)"/>
<path d="M240 1106 C238 1120 240 1136 242 1150 M276 1106 C278 1120 276 1136 274 1150 M222 1112 C220 1126 222 1140 224 1152 M294 1112 C296 1126 294 1140 292 1152" stroke="#2e302f" stroke-width="1.600" fill="none"/>
<circle cx="257" cy="1025.500" r="1.700" fill="#f0f0f0"/>
</g>
</g>
<!-- c2 sagittal -->
<g clip-path="url(#cc2)">
<g filter="url(#bb1)">
<path d="M432 1013 C398 1013 368 1034 363 1062 C361 1074 364 1084 362 1092 L350 1104 C350 1110 356 1112 358 1116 C356 1124 360 1132 366 1138 L372 1154 L482 1154 C480 1140 481 1128 484 1116 C488 1108 494 1100 498 1090 C504 1078 505 1066 502 1054 C494 1028 464 1013 432 1013Z" fill="#141615" stroke="#4a4d4c" stroke-width="1.200"/>
<path d="M432 1018 C402 1018 374 1037 369 1062 C367 1074 370 1082 376 1088 M484 1110 C490 1102 495 1094 497 1084 C500 1072 500 1064 497 1054 C490 1032 462 1018 432 1018" fill="none" stroke="#303332" stroke-width="1"/>
</g>
<g opacity="0.800">
<path d="M432 1023 C404 1023 380 1040 375 1062 C373 1074 376 1082 384 1088 C394 1092 408 1090 418 1094 C424 1098 430 1100 436 1100 C444 1096 452 1098 458 1104 C466 1112 478 1110 484 1102 C490 1094 494 1084 495 1074 C496 1066 495 1060 492 1054 C486 1036 460 1023 432 1023Z" fill="#5c5c5c" filter="url(#gy2)"/>
<clipPath id="c2b"><path d="M432 1023 C404 1023 380 1040 375 1062 C373 1074 376 1082 384 1088 C394 1092 408 1090 418 1094 C424 1098 430 1100 436 1100 C444 1096 452 1098 458 1104 C466 1112 478 1110 484 1102 C490 1094 494 1084 495 1074 C496 1066 495 1060 492 1054 C486 1036 460 1023 432 1023Z"/></clipPath>
<g clip-path="url(#c2b)"><path d="M432 1023 C404 1023 380 1040 375 1062 C373 1074 376 1082 384 1088 C394 1092 408 1090 418 1094 C424 1098 430 1100 436 1100 C444 1096 452 1098 458 1104 C466 1112 478 1110 484 1102 C490 1094 494 1084 495 1074 C496 1066 495 1060 492 1054 C486 1036 460 1023 432 1023Z" fill="none" stroke="#a8a8a8" stroke-width="8" opacity="0.6" filter="url(#bb2)"/></g>
<g filter="url(#bb1)">
<ellipse cx="392" cy="1068" rx="16" ry="18" fill="#909090" opacity="0.600" filter="url(#bb2)"/>
<path d="M404 1074 C406 1058 430 1052 448 1058 C458 1062 462 1068 458 1074 C452 1066 440 1062 426 1064 C414 1066 410 1072 404 1074Z" fill="#1c1c1c"/>
<path d="M412 1076 C418 1066 436 1064 448 1070 C444 1076 436 1080 428 1080Z" fill="#6c6c6c"/>
<path d="M436 1082 C442 1078 450 1080 452 1090 C454 1110 456 1130 458 1154 L448 1154 C446 1130 442 1108 436 1094Z" fill="#505050"/>
<ellipse cx="470" cy="1094" rx="16" ry="13" fill="#787878"/>
<path d="M458 1092 L482 1088 M460 1100 L480 1098 M462 1086 L478 1082" stroke="#444" stroke-width="0.700"/>
</g></g>
<g filter="url(#bb1)">
<ellipse cx="400" cy="1124" rx="30" ry="18" fill="#1c1e1d" filter="url(#bb2)"/>
<path d="M486 1112 C482 1124 482 1140 484 1154" stroke="#3a3d3c" stroke-width="1.600" fill="none"/>
</g>
</g>
<!-- c3 axial -->
<g clip-path="url(#cc3)">
<g filter="url(#bb1)">
<ellipse cx="436" cy="1243" rx="57.500" ry="66" fill="#151716" stroke="#4c4f4e" stroke-width="1.300"/>
<ellipse cx="436" cy="1243" rx="54" ry="62.500" fill="none" stroke="#2c2f2e" stroke-width="1"/>
<ellipse cx="436" cy="1243" rx="51" ry="59.500" fill="none" stroke="#444746" stroke-width="0.900"/>
</g>
<g opacity="0.600">
<ellipse cx="436" cy="1243" rx="48.500" ry="57" fill="#5a5a5a" filter="url(#gy2)"/>
<g filter="url(#bb1)">
<ellipse cx="412" cy="1246" rx="14" ry="30" fill="#6e6e6e" opacity="0.700" filter="url(#bb2)"/><ellipse cx="460" cy="1246" rx="14" ry="30" fill="#6e6e6e" opacity="0.700" filter="url(#bb2)"/>
<path d="M436 1188 V1222 M436 1268 V1298" stroke="#2a2a2a" stroke-width="1.100"/>
</g><g filter="url(#bbm)">
<path d="M428 1212 C430 1218 433 1224 435 1232 L437 1232 C439 1224 442 1218 444 1212 C440 1216 432 1216 428 1212Z" fill="#9a9a9a"/>
<path d="M426 1256 C430 1252 434 1254 436 1260 C438 1254 442 1252 446 1256 C444 1264 440 1270 436 1270 C432 1270 428 1264 426 1256Z" fill="#3a3a3a"/>
<path d="M436 1203 l-4 -5 M436 1203 l4 -5" stroke="#a0a0a0" stroke-width="1"/>
</g></g>
<g filter="url(#bb1)"><path d="M431 1296 l3 -2.500 l3 2 l-0.500 4 l-4 1z" fill="#f4f4f4"/></g>
</g>
<!-- cyan graphics -->
<g fill="none" stroke="#2aa3a8" stroke-width="0.900">
<g clip-path="url(#cc1)"><rect x="175.600" y="1004.500" width="164" height="131"/></g>
<g clip-path="url(#cc2)"><path d="M344.600 1011.500 L507 1000 L513.700 1128.800 L353.900 1141Z"/></g>
<g clip-path="url(#cc3)"><path d="M352.500 1155 V1320.600 H516 V1155"/></g>
<path d="M342 1158 H352.500" />
</g>
<g fill="#35c4dc">
<rect x="256" y="1003" width="3.200" height="3.200"/><rect x="255.500" y="1134" width="3.200" height="3.200"/>
<circle cx="216.500" cy="1069.700" r="1.800"/><circle cx="297.500" cy="1070" r="1.800"/><circle cx="257" cy="1070" r="0.700"/>
<rect x="423.600" y="1003.800" width="3.200" height="3.200"/><rect x="434.200" y="1133.300" width="3.200" height="3.200"/>
<circle cx="389.500" cy="1073" r="1.800"/><circle cx="471" cy="1067" r="1.800"/><circle cx="430.600" cy="1070" r="0.700"/>
<circle cx="394" cy="1241" r="1.800"/><circle cx="475.600" cy="1241" r="1.800"/><circle cx="435" cy="1241" r="0.700"/>
</g>
</svg>
<div class="t cvt" style="left:166px;top:981.5px">DISCOVERY MR950 7T 12941234<br>Ex: 317<br>Se: 1<br>Im: 25<br>Cor A36.0</div>
<div class="t cvt" style="left:246px;top:981.5px">S 120</div>
<div class="t cvt r" style="left:260px;width:80px;text-align:right;top:981.5px">UMCS</div>
<div class="t cvt r" style="left:260px;width:80px;text-align:right;top:990.5px">anonymous<br>24Y 0000000000<br>DOB: Feb 20 1996<br>Dec 16 2020<br>09:31:10 AM<br>Mag = 1.0</div>
<div class="t cvt" style="left:166px;top:1102.3px">FSR/30<br>TR:5.2<br>TE:1.4/Fr<br>EC:1/1 31.3kHz</div>
<div class="t cvt" style="left:166px;top:1125.3px">RM:Nova32Ch Head<br>FOV:24x24<br>8.0thk/0.0sp/C<br>30/00:24<br>256X128/1.00 NEX<br>/SQ</div>
<div class="t cvt" style="left:247px;top:1147.4px">I 120</div>
<div class="t cvt r" style="left:260px;width:80px;text-align:right;top:1147.4px">W =&nbsp; 4274 L =&nbsp; 1982</div>
<div class="t cvt" style="left:165.5px;top:1062px">R</div>
<div class="t cvt" style="left:337.5px;top:1062px">L</div>
<div class="t cvt" style="left:344px;top:982.5px">DISCOVERY MR950 7T 12341234<br>Ex: 317<br>Se: 1<br>Im: 25<br>Sag L4.0</div>
<div class="t cvt" style="left:424px;top:982.5px">S 120</div>
<div class="t cvt r" style="left:432px;width:80px;text-align:right;top:982.5px">UMCS</div>
<div class="t cvt r" style="left:432px;width:80px;text-align:right;top:991.5px">anonymous<br>24Y 0000000000<br>DOB: Feb 20 1996<br>Dec 16 2020<br>09:31:10 AM<br>Mag = 1.0</div>
<div class="t cvt" style="left:344px;top:1102.3px">FSR/30<br>TR:5.2<br>TE:1.4/Fr<br>EC:1/1 31.3kHz</div>
<div class="t cvt" style="left:344px;top:1125.3px">RM:Nova32Ch Head<br>FOV:24x24<br>8.0thk/0.0sp/C<br>30/00:24<br>256X128/1.00 NEX<br>/SQ</div>
<div class="t cvt" style="left:425px;top:1147.4px">I 120</div>
<div class="t cvt r" style="left:432px;width:80px;text-align:right;top:1147.4px">W =&nbsp; 4274 L =&nbsp; 1982</div>
<div class="t cvt" style="left:343.5px;top:1062px">A</div>
<div class="t cvt" style="left:343px;top:1156.5px">DISCOVERY MR950 7T 12941234<br>Ex: 317<br>Se: 1<br>Im: 5<br>Ax I4.0</div>
<div class="t cvt" style="left:424px;top:1156.5px">A 160</div>
<div class="t cvt r" style="left:437px;width:80px;text-align:right;top:1156.5px">UMCS</div>
<div class="t cvt r" style="left:437px;width:80px;text-align:right;top:1165.5px">anonymous<br>24Y 0000000000<br>DOB: Feb 20 1996<br>Dec 16 2020<br>09:31:10 AM<br>Mag = 1.0</div>
<div class="t cvt" style="left:343px;top:1276.8px">FSR/30<br>TR:5.2<br>TE:1.4/Fr<br>EC:1/1 31.3kHz</div>
<div class="t cvt" style="left:343px;top:1299.2px">RM:Nova32Ch Head<br>FOV:24x24<br>8.0thk/0.0sp/C<br>30/00:24<br>256X128/1.00 NEX<br>/SQ</div>
<div class="t cvt" style="left:424px;top:1321px">P 80</div>
<div class="t cvt r" style="left:437px;width:80px;text-align:right;top:1321px">W =&nbsp; 4274 L =&nbsp; 1982</div>
<div class="t cvt" style="left:343px;top:1228px">R</div>
<div class="t cvt" style="left:513.5px;top:1228px">L</div>
<div style="left:164.500px;top:1153.500px;width:177px;height:13px;background:#1f2a66"></div>
<div class="t" style="left:167.500px;top:1156.200px;font-size:7.200px;font-weight:bold;color:#fff;letter-spacing:0">Ax BRAVO T1</div>
<div style="left:256.700px;top:1155px;width:16px;height:10px;background:#aeb8d8;border:0.600px solid #d4daec;border-right-color:#556;border-bottom-color:#556;border-radius:1px"></div>
<div class="t" style="left:256.700px;width:16px;text-align:center;top:1157px;font-size:6.400px;font-weight:bold;color:#222">GRx</div>
<div style="left:275px;top:1155px;width:16px;height:10px;background:#5a6aa6;border:0.600px solid #7a88c0;border-radius:1px"></div>
<div style="left:278px;top:1156.500px;width:5px;height:7px;background:#7886bc;border-radius:2px"></div>
<div class="t" style="left:300px;width:31.500px;text-align:right;top:1155.500px;font-size:9px;font-weight:bold;color:#fff;letter-spacing:-0.200px">4:24</div>
<div style="left:333.600px;top:1155px;width:7.600px;height:10px;background:#5a6cc0;border:0.600px solid #a0b0e8;border-radius:1px"></div>
<div class="t" style="left:335.300px;top:1158px;font-size:4.500px;color:#fff">▶</div>
<div class="t" style="left:127.4px;width:80px;text-align:right;top:1171.6px;font-size:4.400px;letter-spacing:0.100px;font-weight:bold;color:#eef0fa">Scan Plane:</div>
<div style="left:209.5px;top:1169.2px;width:22px;height:9.4px;background:#7282ba;border:0.700px solid #5666a0;border-right-color:#95a3d2;border-bottom-color:#95a3d2"></div>
<div class="t" style="left:212.0px;top:1171.6px;font-size:4.800px;font-weight:bold;color:#93a1d0">Oblique</div>
<div style="left:231.5px;top:1169.2px;width:9px;height:9.4px;background:#7585be;border:0.700px solid #9dabd8;border-right-color:#4d5b94;border-bottom-color:#4d5b94"></div>
<div class="t" style="left:234.1px;top:1172.2px;font-size:3.600px;color:#a0acd8">▼</div>
<div class="t" style="left:127.4px;width:80px;text-align:right;top:1183.2px;font-size:4.400px;letter-spacing:0.100px;font-weight:bold;color:#eef0fa">Freq. FOV:</div>
<div style="left:209.5px;top:1180.8px;width:22px;height:9.4px;background:#7282ba;border:0.700px solid #5666a0;border-right-color:#95a3d2;border-bottom-color:#95a3d2"></div>
<div class="t" style="left:212.0px;top:1183.2px;font-size:4.800px;font-weight:bold;color:#93a1d0">22.0</div>
<div style="left:231.5px;top:1180.8px;width:9px;height:9.4px;background:#7585be;border:0.700px solid #9dabd8;border-right-color:#4d5b94;border-bottom-color:#4d5b94"></div>
<div class="t" style="left:234.1px;top:1183.8px;font-size:3.600px;color:#a0acd8">▼</div>
<div style="left:242.6px;top:1180.8px;width:7.400px;height:4.600px;background:#7585be;border:0.600px solid #9dabd8;border-right-color:#4d5b94;border-bottom-color:#4d5b94"></div>
<div style="left:242.6px;top:1185.6px;width:7.400px;height:4.600px;background:#7585be;border:0.600px solid #9dabd8;border-right-color:#4d5b94;border-bottom-color:#4d5b94"></div>
<div class="t" style="left:127.4px;width:80px;text-align:right;top:1194.6px;font-size:4.400px;letter-spacing:0.100px;font-weight:bold;color:#eef0fa">Phase FOV:</div>
<div style="left:209.5px;top:1192.2px;width:22px;height:9.4px;background:#7282ba;border:0.700px solid #5666a0;border-right-color:#95a3d2;border-bottom-color:#95a3d2"></div>
<div class="t" style="left:212.0px;top:1194.6px;font-size:4.800px;font-weight:bold;color:#93a1d0">1.00</div>
<div style="left:231.5px;top:1192.2px;width:9px;height:9.4px;background:#7585be;border:0.700px solid #9dabd8;border-right-color:#4d5b94;border-bottom-color:#4d5b94"></div>
<div class="t" style="left:234.1px;top:1195.2px;font-size:3.600px;color:#a0acd8">▼</div>
<div style="left:242.6px;top:1192.2px;width:7.400px;height:4.600px;background:#7585be;border:0.600px solid #9dabd8;border-right-color:#4d5b94;border-bottom-color:#4d5b94"></div>
<div style="left:242.6px;top:1197.0px;width:7.400px;height:4.600px;background:#7585be;border:0.600px solid #9dabd8;border-right-color:#4d5b94;border-bottom-color:#4d5b94"></div>
<div class="t" style="left:127.4px;width:80px;text-align:right;top:1206.0px;font-size:4.400px;letter-spacing:0.100px;font-weight:bold;color:#eef0fa">Slice Thickness:</div>
<div style="left:209.5px;top:1203.6000000000001px;width:22px;height:9.4px;background:#7282ba;border:0.700px solid #5666a0;border-right-color:#95a3d2;border-bottom-color:#95a3d2"></div>
<div class="t" style="left:212.0px;top:1206.0px;font-size:4.800px;font-weight:bold;color:#93a1d0">1.0</div>
<div style="left:231.5px;top:1203.6000000000001px;width:9px;height:9.4px;background:#7585be;border:0.700px solid #9dabd8;border-right-color:#4d5b94;border-bottom-color:#4d5b94"></div>
<div class="t" style="left:234.1px;top:1206.6px;font-size:3.600px;color:#a0acd8">▼</div>
<div style="left:242.6px;top:1203.6000000000001px;width:7.400px;height:4.600px;background:#7585be;border:0.600px solid #9dabd8;border-right-color:#4d5b94;border-bottom-color:#4d5b94"></div>
<div style="left:242.6px;top:1208.4px;width:7.400px;height:4.600px;background:#7585be;border:0.600px solid #9dabd8;border-right-color:#4d5b94;border-bottom-color:#4d5b94"></div>
<div class="t" style="left:218px;width:80px;text-align:right;top:1171.6px;font-size:4.400px;letter-spacing:0.100px;font-weight:bold;color:#eef0fa">Freq. Dir:</div>
<div style="left:300px;top:1169.2px;width:22px;height:9.4px;background:#7282ba;border:0.700px solid #5666a0;border-right-color:#95a3d2;border-bottom-color:#95a3d2"></div>
<div class="t" style="left:302.5px;top:1171.6px;font-size:4.800px;font-weight:bold;color:#93a1d0">A/P</div>
<div style="left:322px;top:1169.2px;width:9px;height:9.4px;background:#7585be;border:0.700px solid #9dabd8;border-right-color:#4d5b94;border-bottom-color:#4d5b94"></div>
<div class="t" style="left:324.6px;top:1172.2px;font-size:3.600px;color:#a0acd8">▼</div>
<div class="t" style="left:218px;width:80px;text-align:right;top:1183.2px;font-size:4.400px;letter-spacing:0.100px;font-weight:bold;color:#eef0fa">TR:</div>
<div style="left:300px;top:1180.8px;width:22px;height:9.4px;background:#7282ba;border:0.700px solid #5666a0;border-right-color:#95a3d2;border-bottom-color:#95a3d2"></div>
<div class="t" style="left:302.5px;top:1183.2px;font-size:4.800px;font-weight:bold;color:#93a1d0">6.6</div>
<div style="left:322px;top:1180.8px;width:9px;height:9.4px;background:#7585be;border:0.700px solid #9dabd8;border-right-color:#4d5b94;border-bottom-color:#4d5b94"></div>
<div class="t" style="left:324.6px;top:1183.8px;font-size:3.600px;color:#a0acd8">▼</div>
<div style="left:333.6px;top:1180.8px;width:7.400px;height:4.600px;background:#7585be;border:0.600px solid #9dabd8;border-right-color:#4d5b94;border-bottom-color:#4d5b94"></div>
<div style="left:333.6px;top:1185.6px;width:7.400px;height:4.600px;background:#7585be;border:0.600px solid #9dabd8;border-right-color:#4d5b94;border-bottom-color:#4d5b94"></div>
<div class="t" style="left:218px;width:80px;text-align:right;top:1194.6px;font-size:4.400px;letter-spacing:0.100px;font-weight:bold;color:#eef0fa"># Slabs:</div>
<div style="left:300px;top:1192.2px;width:31px;height:9.4px;background:#7282ba;border:0.700px solid #5666a0;border-right-color:#95a3d2;border-bottom-color:#95a3d2"></div>
<div class="t" style="left:302.5px;top:1194.6px;font-size:4.800px;font-weight:bold;color:#93a1d0">1</div>
<div class="t" style="left:218px;width:80px;text-align:right;top:1206.0px;font-size:4.400px;letter-spacing:0.100px;font-weight:bold;color:#eef0fa">Locs per Slab:</div>
<div style="left:300px;top:1203.6000000000001px;width:22px;height:9.4px;background:#7282ba;border:0.700px solid #5666a0;border-right-color:#95a3d2;border-bottom-color:#95a3d2"></div>
<div class="t" style="left:302.5px;top:1206.0px;font-size:4.800px;font-weight:bold;color:#93a1d0">184</div>
<div style="left:322px;top:1203.6000000000001px;width:9px;height:9.4px;background:#7585be;border:0.700px solid #9dabd8;border-right-color:#4d5b94;border-bottom-color:#4d5b94"></div>
<div class="t" style="left:324.6px;top:1206.6px;font-size:3.600px;color:#a0acd8">▼</div>
<div style="left:333.6px;top:1203.6000000000001px;width:7.400px;height:4.600px;background:#7585be;border:0.600px solid #9dabd8;border-right-color:#4d5b94;border-bottom-color:#4d5b94"></div>
<div style="left:333.6px;top:1208.4px;width:7.400px;height:4.600px;background:#7585be;border:0.600px solid #9dabd8;border-right-color:#4d5b94;border-bottom-color:#4d5b94"></div>
<div class="t" style="left:221px;width:80px;text-align:right;top:1227.6px;font-size:4.400px;letter-spacing:0.100px;font-weight:bold;color:#eef0fa">Max # Slices:</div>
<div class="t" style="left:308.600px;top:1227.600px;font-size:4.500px;letter-spacing:0.100px;font-weight:bold;color:#fff">1462</div>
<div class="t" style="left:221px;width:80px;text-align:right;top:1238.2px;font-size:4.400px;letter-spacing:0.100px;font-weight:bold;color:#eef0fa"># of Acqs:</div>
<div class="t" style="left:316.500px;top:1238.200px;font-size:4.500px;letter-spacing:0.100px;font-weight:bold;color:#fff">1</div>
<div class="t" style="left:221px;width:80px;text-align:right;top:1248.6px;font-size:4.400px;letter-spacing:0.100px;font-weight:bold;color:#eef0fa">Rel. SNR(%):</div>
<div class="t" style="left:311px;top:1248.600px;font-size:4.500px;letter-spacing:0.100px;font-weight:bold;color:#fff">100</div>
<div style="left:328px;top:1246.500px;width:9px;height:9px;background:#7585be;border:0.700px solid #9dabd8;border-right-color:#4d5b94;border-bottom-color:#4d5b94"></div>
<div class="t" style="left:192.4px;top:1234.600px;font-size:4.500px;letter-spacing:0.100px;font-weight:bold;color:#fff">R/L</div>
<div class="t" style="left:215px;top:1234.600px;font-size:4.500px;letter-spacing:0.100px;font-weight:bold;color:#fff">A/P</div>
<div class="t" style="left:237.5px;top:1234.600px;font-size:4.500px;letter-spacing:0.100px;font-weight:bold;color:#fff">S/I</div>
<div class="t" style="left:105.5px;width:80px;text-align:right;top:1245.6px;font-size:4.400px;letter-spacing:0.100px;font-weight:bold;color:#eef0fa">Start</div>
<div class="t" style="left:105.5px;width:80px;text-align:right;top:1259.2px;font-size:4.400px;letter-spacing:0.100px;font-weight:bold;color:#eef0fa">End</div>
<div style="left:187px;top:1243.3px;width:19.5px;height:9.4px;background:#7282ba;border:0.700px solid #5666a0;border-right-color:#95a3d2;border-bottom-color:#95a3d2"></div>
<div class="t" style="left:189.5px;top:1245.7px;font-size:4.800px;font-weight:bold;color:#93a1d0">L5.8</div>
<div style="left:187px;top:1256.9px;width:19.5px;height:9.4px;background:#7282ba;border:0.700px solid #5666a0;border-right-color:#95a3d2;border-bottom-color:#95a3d2"></div>
<div class="t" style="left:189.5px;top:1259.3px;font-size:4.800px;font-weight:bold;color:#93a1d0">L6.4</div>
<div style="left:209px;top:1243.3px;width:20px;height:9.4px;background:#7282ba;border:0.700px solid #5666a0;border-right-color:#95a3d2;border-bottom-color:#95a3d2"></div>
<div class="t" style="left:211.5px;top:1245.7px;font-size:4.800px;font-weight:bold;color:#93a1d0">A33.1</div>
<div style="left:209px;top:1256.9px;width:20px;height:9.4px;background:#7282ba;border:0.700px solid #5666a0;border-right-color:#95a3d2;border-bottom-color:#95a3d2"></div>
<div class="t" style="left:211.5px;top:1259.3px;font-size:4.800px;font-weight:bold;color:#93a1d0">A46.4</div>
<div style="left:231px;top:1243.3px;width:20px;height:9.4px;background:#7282ba;border:0.700px solid #5666a0;border-right-color:#95a3d2;border-bottom-color:#95a3d2"></div>
<div class="t" style="left:233.5px;top:1245.7px;font-size:4.800px;font-weight:bold;color:#93a1d0">I91.9</div>
<div style="left:231px;top:1256.9px;width:20px;height:9.4px;background:#7282ba;border:0.700px solid #5666a0;border-right-color:#95a3d2;border-bottom-color:#95a3d2"></div>
<div class="t" style="left:233.5px;top:1259.3px;font-size:4.800px;font-weight:bold;color:#93a1d0">S84.6</div>
<div style="left:164.500px;top:1277.200px;width:177px;height:0.700px;background:#95a3d2"></div>
<div class="t" style="left:127.4px;width:80px;text-align:right;top:1282.6px;font-size:4.400px;letter-spacing:0.100px;font-weight:bold;color:#eef0fa">Chem SAT:</div>
<div style="left:209.5px;top:1280.2px;width:22px;height:9.4px;background:#7282ba;border:0.700px solid #5666a0;border-right-color:#95a3d2;border-bottom-color:#95a3d2"></div>
<div class="t" style="left:212.0px;top:1282.6px;font-size:4.800px;font-weight:bold;color:#93a1d0">None</div>
<div style="left:231.5px;top:1280.2px;width:9px;height:9.4px;background:#7585be;border:0.700px solid #9dabd8;border-right-color:#4d5b94;border-bottom-color:#4d5b94"></div>
<div class="t" style="left:234.1px;top:1283.2px;font-size:3.600px;color:#a0acd8">▼</div>
<div style="left:178.600px;top:1295px;width:4.800px;height:4.800px;background:#7888c0;box-shadow:0 0 0 0.5px #a0acd8"></div>
<div class="t" style="left:188.500px;top:1295.200px;font-size:4.500px;letter-spacing:0.100px;font-weight:bold;color:#fff">Contrast</div>
<div style="left:164.500px;top:1304.700px;width:177px;height:16px;background:#b6bfdc"></div>
<div class="t" style="left:169.600px;top:1322.300px;font-size:4.800px;font-weight:bold;color:#222c5c">SAR Est: 0.02&nbsp; Peak: 0.92&nbsp; Coil: 0.37&nbsp; Mode: First</div>
<div class="t" style="left:310px;top:1322.300px;font-size:4.800px;font-weight:bold;color:#222c5c">dB/dt: First</div>
<div style="left:522px;top:952px;width:178px;height:358px;background:#7687c1;border-top-left-radius:5px;border-left:0.700px solid #a4b0dc;border-top:0.700px solid #a4b0dc"></div>
<div style="left:519px;top:980px;width:3px;height:350px;background:#6a7ab4"></div>
<svg style="left:524px;top:958px;width:18px;height:14px" viewBox="524 958 18 14"><path d="M526 963 l5 -3 l10 6 l-5 3z" fill="#e4e4e4" stroke="#333" stroke-width="0.600"/><path d="M526 963 v2 l10 6 v-2 M536 971 l5 -3 v-2" fill="#aaa" stroke="#333" stroke-width="0.500"/><path d="M529 963 l3 -1.800 l6 3.600 l-3 1.800z" fill="#777"/></svg>
<div class="t" style="left:540.500px;top:954.500px;font-size:6.600px;font-weight:bold;color:#fff;letter-spacing:0.100px">anonymous</div>
<div class="t" style="left:540.500px;top:963px;font-size:4.600px;font-weight:bold;color:#fff;letter-spacing:0.150px">02-20-1996, 0000000000</div>
<div class="t" style="left:540.500px;top:970.300px;font-size:4.200px;font-weight:bold;color:#fff">MS Oct 2020 V3</div>
<div class="t" style="left:657.500px;top:959.200px;font-size:12px;font-weight:bold;color:#fff;letter-spacing:-0.100px">00:00</div>
<div class="t" style="left:658px;top:970.300px;font-size:5.800px;font-weight:bold;color:#fff">IDLE</div>
<div class="t" style="left:694px;top:973px;font-size:4px;color:#fff">▼</div>
<div style="left:522px;top:978.400px;width:178px;height:0.700px;background:#a4b0dc"></div>
<div class="t" style="left:524px;top:980.800px;font-size:4.600px;font-weight:bold;color:#fff">SAR: First</div>
<div class="t" style="left:524px;top:987.300px;font-size:4.600px;font-weight:bold;color:#fff">dB/dt: First, 100%</div>
<div class="t" style="left:574px;top:981.500px;font-size:4.600px;font-weight:bold;color:#fff;letter-spacing:0.050px">Prescan values&nbsp; R1: 13&nbsp; R2: 29&nbsp; TG: 167&nbsp; AX: 297954242</div>
<svg style="left:530px;top:993px;width:160px;height:148px" viewBox="530 993 160 148">
<defs><clipPath id="cc4"><rect x="531.400" y="994.500" width="149" height="144.600"/></clipPath></defs>
<rect x="531" y="994" width="150" height="145.500" fill="#030404" stroke="#d6cf43" stroke-width="0.900"/>
<rect x="682" y="994" width="4.800" height="145.500" fill="#6a7ab4" stroke="#a4b0dc" stroke-width="0.400"/><path d="M682.500 1027 h4" stroke="#dde" stroke-width="0.800"/><path d="M683 999 l1.400 -3 l1.400 3z M683 1134 l1.400 3.500 l1.400 -3.500z" fill="none" stroke="#dde" stroke-width="0.500"/>
<g clip-path="url(#cc4)">
<g filter="url(#bb1)">
<path d="M606 1022.500 C578 1022.500 558 1040 555 1062 C553.500 1072 556 1080 554 1086 L546 1096 C546 1100 550 1102 552 1105 C550 1112 554 1118 558 1122 L562 1140 L652 1140 C650 1128 651 1118 654 1108 C658 1100 662 1092 664.500 1084 C668 1074 668 1064 665 1056 C658 1036 634 1022.500 606 1022.500Z" fill="#0a0c0b" stroke="#353837" stroke-width="1"/>
<path d="M606 1026.500 C581 1026.500 562 1042 559.500 1062 C558 1072 560 1078 564 1084 M654 1102 C658 1096 660.500 1090 662 1082 C664 1072 664 1064 661 1056 C655 1039 632 1026.500 606 1026.500" fill="none" stroke="#2e3130" stroke-width="0.900"/>
</g>
<g opacity="0.920">
<path d="M606 1031 C583 1031 566 1045 564 1062 C562.500 1072 565 1078 571 1083 C580 1086 590 1084 598 1088 C603 1091 608 1093 613 1093 C619 1090 626 1092 631 1097 C637 1103 646 1102 651 1095 C656 1088 658.500 1080 659 1072 C659.500 1066 659 1060 657 1056 C652 1042 630 1031 606 1031Z" fill="#5e5e5e" filter="url(#gy2)"/>
<clipPath id="c4b"><path d="M606 1031 C583 1031 566 1045 564 1062 C562.500 1072 565 1078 571 1083 C580 1086 590 1084 598 1088 C603 1091 608 1093 613 1093 C619 1090 626 1092 631 1097 C637 1103 646 1102 651 1095 C656 1088 658.500 1080 659 1072 C659.500 1066 659 1060 657 1056 C652 1042 630 1031 606 1031Z"/></clipPath>
<g clip-path="url(#c4b)"><path d="M606 1031 C583 1031 566 1045 564 1062 C562.500 1072 565 1078 571 1083 C580 1086 590 1084 598 1088 C603 1091 608 1093 613 1093 C619 1090 626 1092 631 1097 C637 1103 646 1102 651 1095 C656 1088 658.500 1080 659 1072 C659.500 1066 659 1060 657 1056 C652 1042 630 1031 606 1031Z" fill="none" stroke="#b4b4b4" stroke-width="9" opacity="0.75" filter="url(#bb2)"/></g>
<g filter="url(#bb1)">
<path d="M586 1072 C588 1059 608 1054 623 1059 C631 1062 634 1068 631 1072 C626 1066 616 1062 604 1064 C594 1066 591 1070 586 1072Z" fill="#1a1a1a"/>
<path d="M594 1074 C599 1066 613 1064 623 1069 C620 1074 613 1077 606 1077Z" fill="#707070"/>
<path d="M612 1078 C617 1075 624 1077 626 1085 C628 1102 630 1120 632 1140 L623 1140 C621 1120 618 1100 612 1088Z" fill="#484848"/>
<ellipse cx="640" cy="1088" rx="14" ry="11" fill="#7c7c7c"/>
<path d="M630 1086 L650 1083 M631 1093 L649 1091" stroke="#444" stroke-width="0.700"/>
</g></g>
<g filter="url(#bb1)"><ellipse cx="588" cy="1114" rx="24" ry="14" fill="#1a1c1b" filter="url(#bb2)"/></g>
</g></svg>
<div class="t cvt" style="left:532.5px;top:996px">Ex: 317<br>Se: 1<br>Im: 16<br>Sag R4.0</div>
<div class="t cvt r" style="left:599px;width:80px;text-align:right;top:996px">anonymous</div>
<div class="t cvt" style="left:532.5px;top:1112.5px">FSR/30<br>TR:5.2<br>TE:1.4/Fr<br>EC:1/1 31.3kHz</div>
<div class="t cvt" style="left:532.5px;top:1133.5px">FOV:24x24</div>
<div class="t cvt r" style="left:599px;width:80px;text-align:right;top:1133.5px">W =&nbsp; 3601 L =&nbsp; 1800</div>
<div style="left:534.4px;top:1145.300px;width:4.800px;height:4.800px;background:#050505;box-shadow:0 0 0 0.5px #a8b4dc"></div>
<div class="t" style="left:541.6px;top:1145.600px;font-size:4.600px;font-weight:bold;font-style:italic;color:#20285a">Autoview</div>
<div style="left:588.5px;top:1145.300px;width:4.800px;height:4.800px;background:#93a0cc;box-shadow:0 0 0 0.5px #a8b4dc"></div>
<div class="t" style="left:595.7px;top:1145.600px;font-size:4.600px;font-weight:bold;font-style:italic;color:#20285a">ReportCursor</div>
<div style="left:643.7px;top:1145.300px;width:4.800px;height:4.800px;background:#050505;box-shadow:0 0 0 0.5px #a8b4dc"></div>
<div class="t" style="left:651px;top:1145.600px;font-size:4.600px;font-weight:bold;font-style:italic;color:#20285a">Auto W/L</div>
<div style="left:522.500px;top:1156px;width:177.500px;height:10px;background:#1f2a66"></div>
<svg style="left:522.500px;top:1156px;width:85px;height:10px" viewBox="522.500 1156 85 10"><path d="M522.500 1166 V1157 H561 L566 1166Z" fill="#8a99cb"/><path d="M566.500 1157 H598 L603 1166 H571.500Z" fill="#2c3b82" stroke="#5a6ab0" stroke-width="0.500"/></svg>
<div class="t" style="left:527px;top:1159.300px;font-size:4.800px;font-weight:bold;color:#1c2458">Protocol Notes</div>
<div class="t" style="left:573px;top:1159.300px;font-size:4.800px;font-weight:bold;color:#fff">Waveforms</div>
<div style="left:523.6px;top:1166.300px;width:10px;height:11.300px;background:#7c8cc4;border:0.600px solid #9dabd8;border-right-color:#56649c;border-bottom-color:#56649c"></div>
<div style="left:535px;top:1166.300px;width:10.5px;height:11.300px;background:#7c8cc4;border:0.600px solid #9dabd8;border-right-color:#56649c;border-bottom-color:#56649c"></div>
<div style="left:547px;top:1166.300px;width:10.6px;height:11.300px;background:#7c8cc4;border:0.600px solid #9dabd8;border-right-color:#56649c;border-bottom-color:#56649c"></div>
<div style="left:559px;top:1166.300px;width:42.7px;height:11.300px;background:#7c8cc4;border:0.600px solid #9dabd8;border-right-color:#56649c;border-bottom-color:#56649c"></div>
<div style="left:601.7px;top:1166.300px;width:10.8px;height:11.300px;background:#7c8cc4;border:0.600px solid #9dabd8;border-right-color:#56649c;border-bottom-color:#56649c"></div>
<div style="left:614.6px;top:1166.300px;width:10px;height:11.300px;background:#7c8cc4;border:0.600px solid #9dabd8;border-right-color:#56649c;border-bottom-color:#56649c"></div>
<div style="left:626px;top:1166.300px;width:11px;height:11.300px;background:#7c8cc4;border:0.600px solid #9dabd8;border-right-color:#56649c;border-bottom-color:#56649c"></div>
<div style="left:638px;top:1166.300px;width:11px;height:11.300px;background:#7c8cc4;border:0.600px solid #9dabd8;border-right-color:#56649c;border-bottom-color:#56649c"></div>
<div style="left:651px;top:1166.300px;width:10.5px;height:11.300px;background:#7c8cc4;border:0.600px solid #9dabd8;border-right-color:#56649c;border-bottom-color:#56649c"></div>
<div style="left:663px;top:1166.300px;width:10px;height:11.300px;background:#7c8cc4;border:0.600px solid #9dabd8;border-right-color:#56649c;border-bottom-color:#56649c"></div>
<div style="left:675px;top:1166.300px;width:9px;height:11.300px;background:#7c8cc4;border:0.600px solid #9dabd8;border-right-color:#56649c;border-bottom-color:#56649c"></div>
<div style="left:686px;top:1166.300px;width:9px;height:11.300px;background:#7c8cc4;border:0.600px solid #9dabd8;border-right-color:#56649c;border-bottom-color:#56649c"></div>
<div style="left:697px;top:1166.300px;width:3px;height:11.300px;background:#7c8cc4;border:0.600px solid #9dabd8;border-right-color:#56649c;border-bottom-color:#56649c"></div>
<div class="t" style="left:561.500px;top:1169.500px;font-size:4.600px;font-weight:bold;color:#95a3d2">Medium</div>
<div class="t" style="left:605px;top:1170px;font-size:3.600px;color:#95a3d2">▼</div>
<div class="t" style="left:617.700px;top:1169.200px;font-size:5px;font-weight:bold;color:#95a3d2">B</div><div class="t" style="left:630.500px;top:1169.200px;font-size:5px;font-style:italic;color:#95a3d2">I</div><div class="t" style="left:641.500px;top:1169.200px;font-size:5px;text-decoration:underline;color:#95a3d2">U</div>
<div style="left:654px;top:1169px;width:4.500px;height:5px;background:#b8a878;opacity:0.700"></div>
<div style="left:666px;top:1169px;width:4.500px;height:5px;background:#b8a878;opacity:0.700"></div>
<div style="left:677.5px;top:1169px;width:4.500px;height:5px;background:#b8a878;opacity:0.700"></div>
<div style="left:688.5px;top:1169px;width:4.500px;height:5px;background:#b8a878;opacity:0.700"></div>
<div style="left:523px;top:1177.700px;width:177px;height:132.300px;background:#ece9d7"></div>
<div style="left:34.500px;top:1330.500px;width:665.500px;height:27.500px;background:#2a3a7c"></div>
<div class="t" style="left:36px;top:1338.500px;font-size:5.400px;line-height:6.500px;font-weight:bold;color:#fff">10:03 AM<br>December 16</div>
<svg style="left:70px;top:1332px;width:180px;height:26px" viewBox="70 1332 180 26">
<path d="M72 1345 h2 v-2 h2 v-2 h2 v-2 h2 v-2 h1.500 v9.500 h-9.500z" fill="#e8e8e8"/><rect x="72" y="1344" width="5" height="2.500" fill="#3c3"/>
<g fill="#c8c8c8" stroke="#555" stroke-width="0.400"><ellipse cx="105" cy="1344" rx="5" ry="1.600"/><ellipse cx="105" cy="1341.600" rx="5" ry="1.600"/><ellipse cx="105" cy="1339.200" rx="5" ry="1.600"/><ellipse cx="105" cy="1336.800" rx="5" ry="1.600"/></g>
<rect x="139.500" y="1337" width="7" height="6.500" fill="#e8e8e8" stroke="#444" stroke-width="0.500"/><path d="M139 1345.500 h9 M141 1339 h4 M141 1341 h3" stroke="#ddd" stroke-width="0.800"/><path d="M147 1346 l1.500 1.500" stroke="#222" stroke-width="0.800"/>
<ellipse cx="185.500" cy="1342" rx="4.500" ry="4" fill="#c8c8c8" stroke="#555" stroke-width="0.500"/><path d="M183 1341 l2.500 3.500 l5.500 -8" fill="none" stroke="#fff" stroke-width="1.600"/><path d="M183 1341 l2.500 3.500 l5.500 -8" fill="none" stroke="#888" stroke-width="0.500"/>
<rect x="224" y="1337" width="6.500" height="9.500" fill="#f4f4f4" stroke="#222" stroke-width="1"/><path d="M225 1339 h4.500 M225 1341.700 h4.500 M225 1344.400 h4.500" stroke="#222" stroke-width="0.900"/>
</svg>
<div class="t" style="left:70px;width:18px;text-align:center;top:1349.500px;font-size:4.800px;font-weight:bold;color:#fff">26%</div>
<div class="t" style="left:88px;width:34px;text-align:center;top:1346.500px;font-size:4.800px;line-height:5.400px;font-weight:bold;color:#fff">317/2/46<br>46/46</div>
<div style="left:248px;top:1336.600px;width:242.600px;height:16.400px;background:#bcc5e2;border:0.600px solid #e0e6f6;border-right-color:#56649c;border-bottom-color:#56649c"></div>
<div class="t" style="left:248px;width:242.600px;text-align:center;top:1338.300px;font-size:6.350px;line-height:6.500px;color:#1c2450;letter-spacing:0">This system has a failure that could significantly degrade Image Quality. Please<br>contact your Service Provider for corrective action.</div>
<div style="left:492.300px;top:1336.600px;width:10px;height:16.400px;background:#b4bede;border:0.600px solid #e0e6f6;border-right-color:#56649c;border-bottom-color:#56649c"></div>
<div class="t" style="left:495px;top:1342.800px;font-size:4.500px;color:#111">▲</div>
<svg style="left:508px;top:1334px;width:76px;height:22px" viewBox="508 1334 76 22">
<rect x="511.500" y="1337" width="11" height="7" fill="#f0f0f0" stroke="#222" stroke-width="0.700"/><path d="M513 1339 h8 M513 1341.500 h8" stroke="#333" stroke-width="0.800" stroke-dasharray="1.500 0.700"/><circle cx="517" cy="1347.500" r="2.800" fill="#d8d8d8" stroke="#555" stroke-width="0.600"/><circle cx="517" cy="1347.500" r="1" fill="#555"/>
<path d="M549.500 1340 h10 v13 h-10z" fill="#f2f2f2" stroke="#444" stroke-width="0.600"/><path d="M552 1339 h5 v2.500 h-5z" fill="#999"/><path d="M551 1344 h7 M551 1346.500 h7 M551 1349 h5" stroke="#999" stroke-width="0.600"/>
<path d="M568.500 1346 c0 -3 10 -6 12 -3.500 l-1.500 2 l-3 -0.500 l-3 2 l0.500 2z" fill="#e8e8e8" stroke="#444" stroke-width="0.500"/><path d="M570 1347.500 l9 -1.500 l2 4.500 l-9 1.500z" fill="#ccc" stroke="#444" stroke-width="0.500"/>
</svg>
<div class="t" style="left:532px;top:1342px;font-size:5.600px;font-weight:bold;font-style:italic;color:#fff;text-decoration:underline">iling</div>
<div style="left:586px;top:1318px;width:114px;height:40px;background:#8f9dca;border:0.700px solid #b8c2e4"></div>
<div style="left:587.500px;top:1319.500px;width:111px;height:8px;background:#7f8ebf;border:0.500px solid #a8b4dc;border-right-color:#56649c;border-bottom-color:#56649c"></div>
<div class="t" style="left:586px;width:106px;text-align:center;top:1320.500px;font-size:6.400px;font-weight:bold;color:#c2cbe8">SAR Display</div>
<div style="left:690.500px;top:1320.300px;width:6.400px;height:6.400px;border:0.600px solid #c8d0ec"></div><div class="t" style="left:691.500px;top:1321px;font-size:5px;color:#c8d0ec">×</div>
<div class="t" style="left:590.6px;top:1335.5px;font-size:4.600px;font-weight:bold;color:#2c3870">6 Min Avg:</div>
<div style="left:614.6px;top:1333.7px;width:27px;height:8px;background:#8f9dca;border:0.600px solid #56649c;border-right-color:#c8d0ec;border-bottom-color:#c8d0ec"></div>
<div style="left:644px;top:1333.7px;width:9.6px;height:8px;background:#fff;border:0.600px solid #56649c;border-right-color:#c8d0ec;border-bottom-color:#c8d0ec"></div>
<div class="t" style="left:646px;top:1335.5px;font-size:4.600px;font-weight:bold;color:#222">&nbsp;0</div>
<div class="t" style="left:655.5px;top:1335.5px;font-size:4.600px;font-weight:bold;color:#2c3870">%</div>
<div style="left:661px;top:1333.7px;width:11.6px;height:8px;background:#fff;border:0.600px solid #56649c;border-right-color:#c8d0ec;border-bottom-color:#c8d0ec"></div>
<div class="t" style="left:663px;top:1335.5px;font-size:4.600px;font-weight:bold;color:#222">0.0</div>
<div class="t" style="left:677.7px;top:1335.5px;font-size:4.600px;font-weight:bold;color:#2c3870">W/kg</div>
<div class="t" style="left:588.5px;top:1348.3px;font-size:4.600px;font-weight:bold;color:#2c3870">10 Sec Avg:</div>
<div style="left:615.5px;top:1346.5px;width:16.2px;height:8px;background:#fff;border:0.600px solid #56649c;border-right-color:#c8d0ec;border-bottom-color:#c8d0ec"></div>
<div class="t" style="left:617.5px;top:1348.3px;font-size:4.600px;font-weight:bold;color:#222">0.0</div>
<div class="t" style="left:636px;top:1348.3px;font-size:4.600px;font-weight:bold;color:#2c3870">W/kg</div>
<div class="t" style="left:649px;top:1348.3px;font-size:4.600px;font-weight:bold;color:#2c3870">Scan Room:</div>
<div style="left:673.8px;top:1346.5px;width:14.2px;height:8px;background:#fff;border:0.600px solid #56649c;border-right-color:#c8d0ec;border-bottom-color:#c8d0ec"></div>
<div class="t" style="left:675.8px;top:1348.3px;font-size:4.600px;font-weight:bold;color:#222">18.3</div>
<div class="t" style="left:691px;top:1348.3px;font-size:4.600px;font-weight:bold;color:#2c3870">°C</div>
</div>

</body></html>
